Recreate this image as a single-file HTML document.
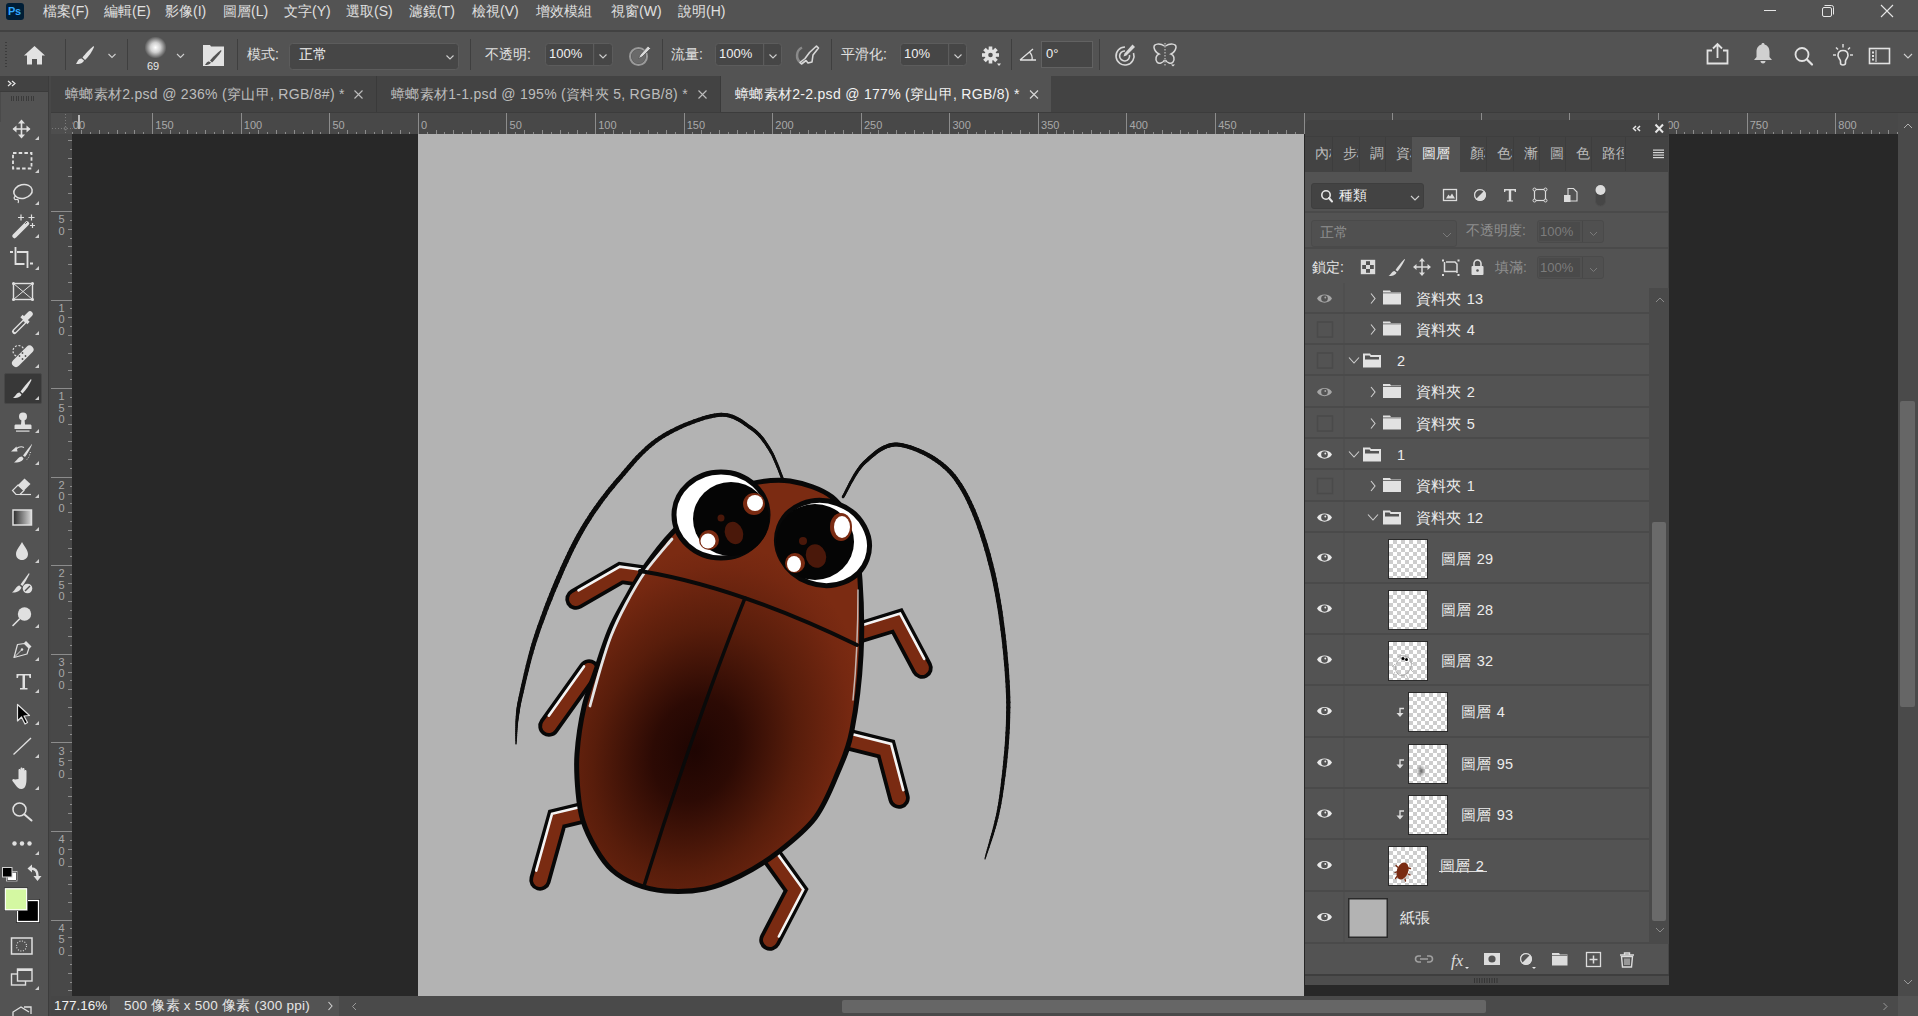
<!DOCTYPE html>
<html><head><meta charset="utf-8">
<style>
*{margin:0;padding:0;box-sizing:border-box}
html,body{width:1918px;height:1016px;overflow:hidden;background:#282828;font-family:"Liberation Sans",sans-serif;color:#dcdcdc;font-size:14px}
.a{position:absolute}
.t{position:absolute;white-space:nowrap;line-height:1}
svg{position:absolute;overflow:visible}
</style></head><body>
<!-- MENU BAR -->
<div class="a" style="left:0;top:0;width:1918px;height:31px;background:#535353"></div>
<div class="a" style="left:0;top:30px;width:1918px;height:2px;background:#424242"></div>
<!-- OPTIONS BAR -->
<div class="a" style="left:0;top:32px;width:1918px;height:44px;background:#535353"></div>
<!-- TAB ROW -->
<div class="a" style="left:0;top:76px;width:1918px;height:37px;background:#3b3b3b"></div>
<div class="a" style="left:51px;top:76px;width:1867px;height:36px;background:#434343"></div>
<!-- LEFT TOOLBAR -->
<div class="a" style="left:0;top:76px;width:48px;height:15px;background:#424242"></div>
<div class="a" style="left:0;top:91px;width:48px;height:1px;background:#3b3b3b"></div>
<div class="a" style="left:0;top:92px;width:48px;height:924px;background:#535353"></div>
<div class="a" style="left:0;top:92px;width:1px;height:30px;background:#4a4a4a"></div>
<div class="a" style="left:48px;top:76px;width:1px;height:940px;background:#3c3c3c"></div>
<div class="a" style="left:49px;top:76px;width:2px;height:940px;background:#474747"></div>
<!-- PASTEBOARD -->
<div class="a" style="left:72px;top:134px;width:1826px;height:862px;background:#282828"></div>

<div class="a" style="left:6px;top:3px;width:18px;height:17px;background:#001e36;border-radius:3px"></div>
<div class="t" style="left:8px;top:6px;font-size:11px;font-weight:bold;color:#31a8ff;letter-spacing:-0.3px">Ps</div>
<div class="t" style="left:43px;top:4px;color:#e0e0e0">檔案(F)</div>
<div class="t" style="left:104px;top:4px;color:#e0e0e0">編輯(E)</div>
<div class="t" style="left:165px;top:4px;color:#e0e0e0">影像(I)</div>
<div class="t" style="left:223px;top:4px;color:#e0e0e0">圖層(L)</div>
<div class="t" style="left:284px;top:4px;color:#e0e0e0">文字(Y)</div>
<div class="t" style="left:346px;top:4px;color:#e0e0e0">選取(S)</div>
<div class="t" style="left:409px;top:4px;color:#e0e0e0">濾鏡(T)</div>
<div class="t" style="left:472px;top:4px;color:#e0e0e0">檢視(V)</div>
<div class="t" style="left:536px;top:4px;color:#e0e0e0">增效模組</div>
<div class="t" style="left:611px;top:4px;color:#e0e0e0">視窗(W)</div>
<div class="t" style="left:678px;top:4px;color:#e0e0e0">說明(H)</div>
<svg style="left:0;top:0" width="1918" height="31">
<line x1="1764" y1="10.5" x2="1776" y2="10.5" stroke="#e6e6e6" stroke-width="1"/>
<rect x="1822.5" y="7.5" width="9" height="9" rx="1.5" fill="none" stroke="#e6e6e6" stroke-width="1"/>
<path d="M1824.5,5.5 h7 a2,2 0 0 1 2,2 v7" fill="none" stroke="#e6e6e6" stroke-width="1"/>
<path d="M1881,5 L1893,17 M1893,5 L1881,17" stroke="#e6e6e6" stroke-width="1.1"/>
</svg>

<svg style="left:0;top:32px" width="1918" height="44" viewBox="0 32 1918 44">
<!-- grip -->
<g fill="#3c3c3c"><rect x="5" y="42" width="2" height="1"/><rect x="5" y="45" width="2" height="1"/><rect x="5" y="48" width="2" height="1"/><rect x="5" y="51" width="2" height="1"/><rect x="5" y="54" width="2" height="1"/><rect x="5" y="57" width="2" height="1"/><rect x="5" y="60" width="2" height="1"/><rect x="5" y="63" width="2" height="1"/><rect x="5" y="66" width="2" height="1"/></g>
<!-- home -->
<path d="M34.5,46 L24,55.5 L27,55.5 L27,64.5 L32,64.5 L32,59 L37,59 L37,64.5 L42,64.5 L42,55.5 L45,55.5 Z" fill="#e2e2e2"/>
<!-- separators -->
<g fill="#3f3f3f"><rect x="65" y="39" width="1" height="31"/><rect x="127" y="39" width="1" height="31"/><rect x="237" y="39" width="1" height="31"/><rect x="470" y="39" width="1" height="31"/><rect x="662" y="39" width="1" height="31"/><rect x="831" y="39" width="1" height="31"/><rect x="1011" y="39" width="1" height="31"/><rect x="1099" y="39" width="1" height="31"/></g>
<!-- brush tool icon -->
<path d="M93.5,46 C90,49 85,54 82.5,57.5 L85,60 C88.5,57 92.5,51 94,47 Z" fill="#e2e2e2"/>
<path d="M81.5,58.5 C78,58.5 77.5,62 76,64 C79,64 83,63.5 84,60.5 Z" fill="#e2e2e2"/>
<!-- chevrons -->
<g fill="none" stroke="#cfcfcf" stroke-width="1.1"><path d="M108.5,54 L112,57.5 L115.5,54"/><path d="M177,54 L180.5,57.5 L184,54"/></g>
<!-- brush preset circle -->
<defs><radialGradient id="bp" cx="0.5" cy="0.5" r="0.5"><stop offset="0" stop-color="#ffffff"/><stop offset="0.45" stop-color="#d0d0d0"/><stop offset="1" stop-color="#535353"/></radialGradient></defs>
<circle cx="155.5" cy="47.5" r="11" fill="url(#bp)"/>
<!-- brush settings icon -->
<path d="M203,45 L210,45 L211,46.5 L224,46.5 L224,66 L203,66 Z" fill="#e2e2e2"/>
<path d="M221,50 C217,53 212,58 210,60.5 L212,62.5 C214.5,60 219,55 221.5,51 Z" fill="#535353"/>
<path d="M209,61.5 C206.5,61.5 206,64 205,65 C207.5,65 210,64.5 211,62.5 Z" fill="#535353"/>
<!-- dropdown mode -->
<rect x="289.5" y="43.5" width="169" height="26" rx="3" fill="#464646" stroke="#5c5c5c"/>
<path d="M446.5,55.5 L450,59 L453.5,55.5" fill="none" stroke="#cfcfcf" stroke-width="1.1"/>
<!-- opacity input -->
<rect x="545.5" y="43.5" width="67" height="22" rx="3" fill="#464646" stroke="#5c5c5c"/>
<rect x="593" y="44" width="1.2" height="21.5" fill="#5c5c5c"/>
<path d="M599.5,54.5 L603,58 L606.5,54.5" fill="none" stroke="#cfcfcf" stroke-width="1.1"/>
<!-- pressure opacity icon -->
<circle cx="638.5" cy="56.5" r="8.5" fill="none" stroke="#9a9a9a" stroke-width="2"/>
<circle cx="638.5" cy="56.5" r="7" fill="#6a6a6a"/>
<path d="M648,46 L650.5,48.5 L642,57 L638.5,58.5 L640,55 Z" fill="#d8d8d8" stroke="#535353" stroke-width="0.8"/>
<!-- flow input -->
<rect x="715.5" y="43.5" width="66" height="22" rx="3" fill="#464646" stroke="#5c5c5c"/>
<rect x="763" y="44" width="1.2" height="21.5" fill="#5c5c5c"/>
<path d="M769.5,54.5 L773,58 L776.5,54.5" fill="none" stroke="#cfcfcf" stroke-width="1.1"/>
<!-- airbrush icon -->
<path d="M802,47.5 A9,9 0 0 0 801,63" fill="none" stroke="#8a8a8a" stroke-width="2.5"/>
<path d="M816.5,46 L818.5,48 L813,55 L812,62 L808,63 L806,60.5 L801.5,64 L800,62.5 L805,58.5 L809.5,52.5 Z" fill="none" stroke="#d8d8d8" stroke-width="1.6" stroke-linejoin="round"/>
<!-- smoothing input -->
<rect x="900.5" y="43.5" width="66" height="22" rx="3" fill="#464646" stroke="#5c5c5c"/>
<rect x="948" y="44" width="1.2" height="21.5" fill="#5c5c5c"/>
<path d="M954.5,54.5 L958,58 L961.5,54.5" fill="none" stroke="#cfcfcf" stroke-width="1.1"/>
<!-- gear -->
<g transform="translate(990.5,55)">
<circle r="5.8" fill="#e2e2e2"/>
<g fill="#e2e2e2"><rect x="-1.8" y="-8.5" width="3.6" height="17"/><rect x="-1.8" y="-8.5" width="3.6" height="17" transform="rotate(45)"/><rect x="-1.8" y="-8.5" width="3.6" height="17" transform="rotate(90)"/><rect x="-1.8" y="-8.5" width="3.6" height="17" transform="rotate(135)"/></g>
<circle r="2.3" fill="#535353"/>
</g>
<path d="M997,63.5 L1001,63.5 L999,66 Z" fill="#e2e2e2"/>
<!-- angle icon -->
<path d="M1020,60 L1036,60 M1020,60 L1033,49 M1029.5,52 A9,9 0 0 1 1032,60" fill="none" stroke="#e2e2e2" stroke-width="1.3"/>
<rect x="1041.5" y="41.5" width="51" height="26" fill="#464646" stroke="#626262"/>
<!-- pressure size icon -->
<path d="M1125,47 A9,9 0 1 0 1133.5,53" fill="none" stroke="#d8d8d8" stroke-width="1.6"/>
<path d="M1125,51 A5,5 0 1 0 1129.5,55" fill="none" stroke="#d8d8d8" stroke-width="1.6"/>
<path d="M1132.5,44.5 L1135,47 L1126.5,55.5 L1123.5,56.5 L1124.5,53.5 Z" fill="#d8d8d8"/>
<!-- butterfly -->
<path d="M1164.5,46 C1160,43 1153.5,43.5 1154,47.5 C1154.5,50 1157,53 1159,54 C1156,55 1155,59 1157,62 C1159,64.5 1163,63 1164.5,60 M1165.5,46 C1170,43 1176.5,43.5 1176,47.5 C1175.5,50 1173,53 1171,54 C1174,55 1175,59 1173,62 C1171,64.5 1167,63 1165.5,60" fill="none" stroke="#d8d8d8" stroke-width="1.5"/>
<line x1="1165" y1="43" x2="1165" y2="67" stroke="#d8d8d8" stroke-width="1" stroke-dasharray="1.5,1.5"/>
<path d="M1171,64.5 L1175,64.5 L1173,66.5 Z" fill="#e2e2e2"/>
<!-- right icons: share -->
<path d="M1712,50.5 L1707.5,50.5 L1707.5,63.5 L1727.5,63.5 L1727.5,50.5 L1723,50.5" fill="none" stroke="#e2e2e2" stroke-width="1.8"/>
<path d="M1717.5,58 L1717.5,45 M1713,48.5 L1717.5,44 L1722,48.5" fill="none" stroke="#e2e2e2" stroke-width="1.8"/>
<!-- bell -->
<path d="M1763,43 C1764,43 1764.5,43.5 1764.5,44.5 C1768,45.5 1769.5,48.5 1769.5,52 L1769.5,57 L1772,60 L1754,60 L1756.5,57 L1756.5,52 C1756.5,48.5 1758,45.5 1761.5,44.5 C1761.5,43.5 1762,43 1763,43 Z" fill="#d0d0d0"/>
<path d="M1760.5,61 L1765.5,61 C1765.5,62.5 1764.5,63.5 1763,63.5 C1761.5,63.5 1760.5,62.5 1760.5,61 Z" fill="#d0d0d0"/>
<!-- search -->
<circle cx="1802" cy="54.5" r="6.5" fill="none" stroke="#e2e2e2" stroke-width="1.8"/>
<line x1="1807" y1="59.5" x2="1812" y2="64.5" stroke="#e2e2e2" stroke-width="2.2" stroke-linecap="round"/>
<!-- bulb -->
<path d="M1843,50.5 C1839.5,50.5 1838,53 1838,55.5 C1838,58 1840.5,59.5 1840.5,61 L1840.5,63 C1840.5,64.5 1841.5,65 1843,65 C1844.5,65 1845.5,64.5 1845.5,63 L1845.5,61 C1845.5,59.5 1848,58 1848,55.5 C1848,53 1846.5,50.5 1843,50.5 Z" fill="none" stroke="#e2e2e2" stroke-width="1.6"/>
<g stroke="#e2e2e2" stroke-width="1.4"><line x1="1843" y1="44" x2="1843" y2="47.5"/><line x1="1833" y1="55" x2="1836" y2="55"/><line x1="1850" y1="55" x2="1853" y2="55"/><line x1="1836" y1="47.5" x2="1838" y2="49.5"/><line x1="1850" y1="47.5" x2="1848" y2="49.5"/></g>
<!-- workspace -->
<rect x="1869.5" y="48.5" width="20" height="15" fill="none" stroke="#e2e2e2" stroke-width="1.6"/>
<g fill="#e2e2e2"><rect x="1872" y="51.5" width="2" height="2"/><rect x="1872" y="55" width="2" height="2"/><rect x="1872" y="58.5" width="2" height="2"/><rect x="1875.5" y="50" width="1" height="12"/></g>
<path d="M1904,54 L1908,58 L1912,54" fill="none" stroke="#cfcfcf" stroke-width="1.1"/>
</svg>
<div class="t" style="left:147px;top:61px;font-size:11px;color:#e8e8e8">69</div>
<div class="t" style="left:247px;top:47px;color:#e0e0e0">模式:</div>
<div class="t" style="left:299px;top:47px;color:#f0f0f0">正常</div>
<div class="t" style="left:485px;top:47px;color:#e0e0e0">不透明:</div>
<div class="t" style="left:549px;top:47px;font-size:13px;color:#f0f0f0">100%</div>
<div class="t" style="left:671px;top:47px;color:#e0e0e0">流量:</div>
<div class="t" style="left:719px;top:47px;font-size:13px;color:#f0f0f0">100%</div>
<div class="t" style="left:841px;top:47px;color:#e0e0e0">平滑化:</div>
<div class="t" style="left:904px;top:47px;font-size:13px;color:#f0f0f0">10%</div>
<div class="t" style="left:1046px;top:47px;font-size:13px;color:#f0f0f0">0°</div>

<div class="a" style="left:376px;top:76px;width:1px;height:36px;background:#3a3a3a"></div>
<div class="a" style="left:720px;top:76px;width:1px;height:36px;background:#3a3a3a"></div>
<div class="a" style="left:721px;top:76px;width:330px;height:36px;background:#535353"></div>
<div class="t" style="left:65px;top:87px;letter-spacing:0.3px;color:#bdbdbd">蟑螂素材2.psd @ 236% (穿山甲, RGB/8#) *</div>
<div class="t" style="left:391px;top:87px;letter-spacing:0.3px;color:#bdbdbd">蟑螂素材1-1.psd @ 195% (資料夾 5, RGB/8) *</div>
<div class="t" style="left:735px;top:87px;letter-spacing:0.3px;color:#f2f2f2">蟑螂素材2-2.psd @ 177% (穿山甲, RGB/8) *</div>
<svg style="left:0;top:76px" width="1918" height="36" viewBox="0 76 1918 36">
<path d="M354.5,90.5 L362.5,98.5 M362.5,90.5 L354.5,98.5" stroke="#bdbdbd" stroke-width="1.1"/>
<path d="M698.5,90.5 L706.5,98.5 M706.5,90.5 L698.5,98.5" stroke="#bdbdbd" stroke-width="1.1"/>
<path d="M1030,90.5 L1038,98.5 M1038,90.5 L1030,98.5" stroke="#d8d8d8" stroke-width="1.1"/>
<!-- >> -->
<path d="M8,81 L11,83.5 L8,86 M12,81 L15,83.5 L12,86" fill="none" stroke="#e8e8e8" stroke-width="1.2"/>
<g fill="#3a3a3a"><rect x="11" y="96" width="1" height="5"/><rect x="13" y="96" width="1" height="5"/><rect x="16" y="96" width="1" height="5"/><rect x="18" y="96" width="1" height="5"/><rect x="21" y="96" width="1" height="5"/><rect x="23" y="96" width="1" height="5"/><rect x="26" y="96" width="1" height="5"/><rect x="28" y="96" width="1" height="5"/><rect x="31" y="96" width="1" height="5"/><rect x="33" y="96" width="1" height="5"/></g>
</svg>

<div class="a" style="left:51px;top:112px;width:1867px;height:1px;background:#3c3c3c"></div>
<div class="a" style="left:51px;top:113px;width:1847px;height:21px;background:#484848"></div>
<div class="a" style="left:51px;top:134px;width:21px;height:862px;background:#484848"></div>
<svg style="left:0;top:0" width="1918" height="1016" viewBox="0 0 1918 1016"><g fill="#8c8c8c">
<rect x="72" y="132" width="1" height="2"/>
<rect x="81" y="130" width="1" height="4"/>
<rect x="90" y="132" width="1" height="2"/>
<rect x="99" y="130" width="1" height="4"/>
<rect x="108" y="132" width="1" height="2"/>
<rect x="117" y="130" width="1" height="4"/>
<rect x="125" y="132" width="1" height="2"/>
<rect x="134" y="130" width="1" height="4"/>
<rect x="143" y="132" width="1" height="2"/>
<rect x="152" y="113" width="1" height="21"/>
<rect x="161" y="132" width="1" height="2"/>
<rect x="170" y="130" width="1" height="4"/>
<rect x="179" y="132" width="1" height="2"/>
<rect x="187" y="130" width="1" height="4"/>
<rect x="196" y="132" width="1" height="2"/>
<rect x="205" y="130" width="1" height="4"/>
<rect x="214" y="132" width="1" height="2"/>
<rect x="223" y="130" width="1" height="4"/>
<rect x="232" y="132" width="1" height="2"/>
<rect x="241" y="113" width="1" height="21"/>
<rect x="249" y="132" width="1" height="2"/>
<rect x="258" y="130" width="1" height="4"/>
<rect x="267" y="132" width="1" height="2"/>
<rect x="276" y="130" width="1" height="4"/>
<rect x="285" y="132" width="1" height="2"/>
<rect x="294" y="130" width="1" height="4"/>
<rect x="303" y="132" width="1" height="2"/>
<rect x="312" y="130" width="1" height="4"/>
<rect x="320" y="132" width="1" height="2"/>
<rect x="329" y="113" width="1" height="21"/>
<rect x="338" y="132" width="1" height="2"/>
<rect x="347" y="130" width="1" height="4"/>
<rect x="356" y="132" width="1" height="2"/>
<rect x="365" y="130" width="1" height="4"/>
<rect x="374" y="132" width="1" height="2"/>
<rect x="382" y="130" width="1" height="4"/>
<rect x="391" y="132" width="1" height="2"/>
<rect x="400" y="130" width="1" height="4"/>
<rect x="409" y="132" width="1" height="2"/>
<rect x="418" y="113" width="1" height="21"/>
<rect x="427" y="132" width="1" height="2"/>
<rect x="436" y="130" width="1" height="4"/>
<rect x="444" y="132" width="1" height="2"/>
<rect x="453" y="130" width="1" height="4"/>
<rect x="462" y="132" width="1" height="2"/>
<rect x="471" y="130" width="1" height="4"/>
<rect x="480" y="132" width="1" height="2"/>
<rect x="489" y="130" width="1" height="4"/>
<rect x="498" y="132" width="1" height="2"/>
<rect x="506" y="113" width="1" height="21"/>
<rect x="515" y="132" width="1" height="2"/>
<rect x="524" y="130" width="1" height="4"/>
<rect x="533" y="132" width="1" height="2"/>
<rect x="542" y="130" width="1" height="4"/>
<rect x="551" y="132" width="1" height="2"/>
<rect x="560" y="130" width="1" height="4"/>
<rect x="568" y="132" width="1" height="2"/>
<rect x="577" y="130" width="1" height="4"/>
<rect x="586" y="132" width="1" height="2"/>
<rect x="595" y="113" width="1" height="21"/>
<rect x="604" y="132" width="1" height="2"/>
<rect x="613" y="130" width="1" height="4"/>
<rect x="622" y="132" width="1" height="2"/>
<rect x="630" y="130" width="1" height="4"/>
<rect x="639" y="132" width="1" height="2"/>
<rect x="648" y="130" width="1" height="4"/>
<rect x="657" y="132" width="1" height="2"/>
<rect x="666" y="130" width="1" height="4"/>
<rect x="675" y="132" width="1" height="2"/>
<rect x="684" y="113" width="1" height="21"/>
<rect x="692" y="132" width="1" height="2"/>
<rect x="701" y="130" width="1" height="4"/>
<rect x="710" y="132" width="1" height="2"/>
<rect x="719" y="130" width="1" height="4"/>
<rect x="728" y="132" width="1" height="2"/>
<rect x="737" y="130" width="1" height="4"/>
<rect x="746" y="132" width="1" height="2"/>
<rect x="754" y="130" width="1" height="4"/>
<rect x="763" y="132" width="1" height="2"/>
<rect x="772" y="113" width="1" height="21"/>
<rect x="781" y="132" width="1" height="2"/>
<rect x="790" y="130" width="1" height="4"/>
<rect x="799" y="132" width="1" height="2"/>
<rect x="808" y="130" width="1" height="4"/>
<rect x="816" y="132" width="1" height="2"/>
<rect x="825" y="130" width="1" height="4"/>
<rect x="834" y="132" width="1" height="2"/>
<rect x="843" y="130" width="1" height="4"/>
<rect x="852" y="132" width="1" height="2"/>
<rect x="861" y="113" width="1" height="21"/>
<rect x="870" y="132" width="1" height="2"/>
<rect x="878" y="130" width="1" height="4"/>
<rect x="887" y="132" width="1" height="2"/>
<rect x="896" y="130" width="1" height="4"/>
<rect x="905" y="132" width="1" height="2"/>
<rect x="914" y="130" width="1" height="4"/>
<rect x="923" y="132" width="1" height="2"/>
<rect x="932" y="130" width="1" height="4"/>
<rect x="940" y="132" width="1" height="2"/>
<rect x="949" y="113" width="1" height="21"/>
<rect x="958" y="132" width="1" height="2"/>
<rect x="967" y="130" width="1" height="4"/>
<rect x="976" y="132" width="1" height="2"/>
<rect x="985" y="130" width="1" height="4"/>
<rect x="994" y="132" width="1" height="2"/>
<rect x="1002" y="130" width="1" height="4"/>
<rect x="1011" y="132" width="1" height="2"/>
<rect x="1020" y="130" width="1" height="4"/>
<rect x="1029" y="132" width="1" height="2"/>
<rect x="1038" y="113" width="1" height="21"/>
<rect x="1047" y="132" width="1" height="2"/>
<rect x="1056" y="130" width="1" height="4"/>
<rect x="1064" y="132" width="1" height="2"/>
<rect x="1073" y="130" width="1" height="4"/>
<rect x="1082" y="132" width="1" height="2"/>
<rect x="1091" y="130" width="1" height="4"/>
<rect x="1100" y="132" width="1" height="2"/>
<rect x="1109" y="130" width="1" height="4"/>
<rect x="1118" y="132" width="1" height="2"/>
<rect x="1126" y="113" width="1" height="21"/>
<rect x="1135" y="132" width="1" height="2"/>
<rect x="1144" y="130" width="1" height="4"/>
<rect x="1153" y="132" width="1" height="2"/>
<rect x="1162" y="130" width="1" height="4"/>
<rect x="1171" y="132" width="1" height="2"/>
<rect x="1180" y="130" width="1" height="4"/>
<rect x="1188" y="132" width="1" height="2"/>
<rect x="1197" y="130" width="1" height="4"/>
<rect x="1206" y="132" width="1" height="2"/>
<rect x="1215" y="113" width="1" height="21"/>
<rect x="1224" y="132" width="1" height="2"/>
<rect x="1233" y="130" width="1" height="4"/>
<rect x="1242" y="132" width="1" height="2"/>
<rect x="1250" y="130" width="1" height="4"/>
<rect x="1259" y="132" width="1" height="2"/>
<rect x="1268" y="130" width="1" height="4"/>
<rect x="1277" y="132" width="1" height="2"/>
<rect x="1286" y="130" width="1" height="4"/>
<rect x="1295" y="132" width="1" height="2"/>
<rect x="1304" y="113" width="1" height="21"/>
<rect x="1312" y="132" width="1" height="2"/>
<rect x="1321" y="130" width="1" height="4"/>
<rect x="1330" y="132" width="1" height="2"/>
<rect x="1339" y="130" width="1" height="4"/>
<rect x="1348" y="132" width="1" height="2"/>
<rect x="1357" y="130" width="1" height="4"/>
<rect x="1366" y="132" width="1" height="2"/>
<rect x="1374" y="130" width="1" height="4"/>
<rect x="1383" y="132" width="1" height="2"/>
<rect x="1392" y="113" width="1" height="21"/>
<rect x="1401" y="132" width="1" height="2"/>
<rect x="1410" y="130" width="1" height="4"/>
<rect x="1419" y="132" width="1" height="2"/>
<rect x="1428" y="130" width="1" height="4"/>
<rect x="1436" y="132" width="1" height="2"/>
<rect x="1445" y="130" width="1" height="4"/>
<rect x="1454" y="132" width="1" height="2"/>
<rect x="1463" y="130" width="1" height="4"/>
<rect x="1472" y="132" width="1" height="2"/>
<rect x="1481" y="113" width="1" height="21"/>
<rect x="1490" y="132" width="1" height="2"/>
<rect x="1498" y="130" width="1" height="4"/>
<rect x="1507" y="132" width="1" height="2"/>
<rect x="1516" y="130" width="1" height="4"/>
<rect x="1525" y="132" width="1" height="2"/>
<rect x="1534" y="130" width="1" height="4"/>
<rect x="1543" y="132" width="1" height="2"/>
<rect x="1552" y="130" width="1" height="4"/>
<rect x="1560" y="132" width="1" height="2"/>
<rect x="1569" y="113" width="1" height="21"/>
<rect x="1578" y="132" width="1" height="2"/>
<rect x="1587" y="130" width="1" height="4"/>
<rect x="1596" y="132" width="1" height="2"/>
<rect x="1605" y="130" width="1" height="4"/>
<rect x="1614" y="132" width="1" height="2"/>
<rect x="1622" y="130" width="1" height="4"/>
<rect x="1631" y="132" width="1" height="2"/>
<rect x="1640" y="130" width="1" height="4"/>
<rect x="1649" y="132" width="1" height="2"/>
<rect x="1658" y="113" width="1" height="21"/>
<rect x="1667" y="132" width="1" height="2"/>
<rect x="1676" y="130" width="1" height="4"/>
<rect x="1684" y="132" width="1" height="2"/>
<rect x="1693" y="130" width="1" height="4"/>
<rect x="1702" y="132" width="1" height="2"/>
<rect x="1711" y="130" width="1" height="4"/>
<rect x="1720" y="132" width="1" height="2"/>
<rect x="1729" y="130" width="1" height="4"/>
<rect x="1738" y="132" width="1" height="2"/>
<rect x="1747" y="113" width="1" height="21"/>
<rect x="1755" y="132" width="1" height="2"/>
<rect x="1764" y="130" width="1" height="4"/>
<rect x="1773" y="132" width="1" height="2"/>
<rect x="1782" y="130" width="1" height="4"/>
<rect x="1791" y="132" width="1" height="2"/>
<rect x="1800" y="130" width="1" height="4"/>
<rect x="1809" y="132" width="1" height="2"/>
<rect x="1817" y="130" width="1" height="4"/>
<rect x="1826" y="132" width="1" height="2"/>
<rect x="1835" y="113" width="1" height="21"/>
<rect x="1844" y="132" width="1" height="2"/>
<rect x="1853" y="130" width="1" height="4"/>
<rect x="1862" y="132" width="1" height="2"/>
<rect x="1871" y="130" width="1" height="4"/>
<rect x="1879" y="132" width="1" height="2"/>
<rect x="1888" y="130" width="1" height="4"/>
<rect x="1897" y="132" width="1" height="2"/>
</g><g fill="#8c8c8c">
<rect x="68" y="140" width="4" height="1"/>
<rect x="70" y="149" width="2" height="1"/>
<rect x="68" y="158" width="4" height="1"/>
<rect x="70" y="167" width="2" height="1"/>
<rect x="68" y="176" width="4" height="1"/>
<rect x="70" y="184" width="2" height="1"/>
<rect x="68" y="193" width="4" height="1"/>
<rect x="70" y="202" width="2" height="1"/>
<rect x="51" y="211" width="21" height="1"/>
<rect x="70" y="220" width="2" height="1"/>
<rect x="68" y="229" width="4" height="1"/>
<rect x="70" y="238" width="2" height="1"/>
<rect x="68" y="246" width="4" height="1"/>
<rect x="70" y="255" width="2" height="1"/>
<rect x="68" y="264" width="4" height="1"/>
<rect x="70" y="273" width="2" height="1"/>
<rect x="68" y="282" width="4" height="1"/>
<rect x="70" y="291" width="2" height="1"/>
<rect x="51" y="300" width="21" height="1"/>
<rect x="70" y="308" width="2" height="1"/>
<rect x="68" y="317" width="4" height="1"/>
<rect x="70" y="326" width="2" height="1"/>
<rect x="68" y="335" width="4" height="1"/>
<rect x="70" y="344" width="2" height="1"/>
<rect x="68" y="353" width="4" height="1"/>
<rect x="70" y="362" width="2" height="1"/>
<rect x="68" y="370" width="4" height="1"/>
<rect x="70" y="379" width="2" height="1"/>
<rect x="51" y="388" width="21" height="1"/>
<rect x="70" y="397" width="2" height="1"/>
<rect x="68" y="406" width="4" height="1"/>
<rect x="70" y="415" width="2" height="1"/>
<rect x="68" y="424" width="4" height="1"/>
<rect x="70" y="432" width="2" height="1"/>
<rect x="68" y="441" width="4" height="1"/>
<rect x="70" y="450" width="2" height="1"/>
<rect x="68" y="459" width="4" height="1"/>
<rect x="70" y="468" width="2" height="1"/>
<rect x="51" y="477" width="21" height="1"/>
<rect x="70" y="486" width="2" height="1"/>
<rect x="68" y="494" width="4" height="1"/>
<rect x="70" y="503" width="2" height="1"/>
<rect x="68" y="512" width="4" height="1"/>
<rect x="70" y="521" width="2" height="1"/>
<rect x="68" y="530" width="4" height="1"/>
<rect x="70" y="539" width="2" height="1"/>
<rect x="68" y="548" width="4" height="1"/>
<rect x="70" y="556" width="2" height="1"/>
<rect x="51" y="565" width="21" height="1"/>
<rect x="70" y="574" width="2" height="1"/>
<rect x="68" y="583" width="4" height="1"/>
<rect x="70" y="592" width="2" height="1"/>
<rect x="68" y="601" width="4" height="1"/>
<rect x="70" y="610" width="2" height="1"/>
<rect x="68" y="618" width="4" height="1"/>
<rect x="70" y="627" width="2" height="1"/>
<rect x="68" y="636" width="4" height="1"/>
<rect x="70" y="645" width="2" height="1"/>
<rect x="51" y="654" width="21" height="1"/>
<rect x="70" y="663" width="2" height="1"/>
<rect x="68" y="672" width="4" height="1"/>
<rect x="70" y="680" width="2" height="1"/>
<rect x="68" y="689" width="4" height="1"/>
<rect x="70" y="698" width="2" height="1"/>
<rect x="68" y="707" width="4" height="1"/>
<rect x="70" y="716" width="2" height="1"/>
<rect x="68" y="725" width="4" height="1"/>
<rect x="70" y="734" width="2" height="1"/>
<rect x="51" y="742" width="21" height="1"/>
<rect x="70" y="751" width="2" height="1"/>
<rect x="68" y="760" width="4" height="1"/>
<rect x="70" y="769" width="2" height="1"/>
<rect x="68" y="778" width="4" height="1"/>
<rect x="70" y="787" width="2" height="1"/>
<rect x="68" y="796" width="4" height="1"/>
<rect x="70" y="804" width="2" height="1"/>
<rect x="68" y="813" width="4" height="1"/>
<rect x="70" y="822" width="2" height="1"/>
<rect x="51" y="831" width="21" height="1"/>
<rect x="70" y="840" width="2" height="1"/>
<rect x="68" y="849" width="4" height="1"/>
<rect x="70" y="858" width="2" height="1"/>
<rect x="68" y="866" width="4" height="1"/>
<rect x="70" y="875" width="2" height="1"/>
<rect x="68" y="884" width="4" height="1"/>
<rect x="70" y="893" width="2" height="1"/>
<rect x="68" y="902" width="4" height="1"/>
<rect x="70" y="911" width="2" height="1"/>
<rect x="51" y="920" width="21" height="1"/>
<rect x="70" y="928" width="2" height="1"/>
<rect x="68" y="937" width="4" height="1"/>
<rect x="70" y="946" width="2" height="1"/>
<rect x="68" y="955" width="4" height="1"/>
<rect x="70" y="964" width="2" height="1"/>
<rect x="68" y="973" width="4" height="1"/>
<rect x="70" y="982" width="2" height="1"/>
<rect x="68" y="990" width="4" height="1"/>
</g></svg>
<div class="t" style="left:-21.9px;top:120px;font-size:11px;color:#a8a8a8">250</div>
<div class="t" style="left:66.7px;top:120px;font-size:11px;color:#a8a8a8">200</div>
<div class="t" style="left:155.3px;top:120px;font-size:11px;color:#a8a8a8">150</div>
<div class="t" style="left:243.8px;top:120px;font-size:11px;color:#a8a8a8">100</div>
<div class="t" style="left:332.4px;top:120px;font-size:11px;color:#a8a8a8">50</div>
<div class="t" style="left:421.0px;top:120px;font-size:11px;color:#a8a8a8">0</div>
<div class="t" style="left:509.6px;top:120px;font-size:11px;color:#a8a8a8">50</div>
<div class="t" style="left:598.2px;top:120px;font-size:11px;color:#a8a8a8">100</div>
<div class="t" style="left:686.7px;top:120px;font-size:11px;color:#a8a8a8">150</div>
<div class="t" style="left:775.3px;top:120px;font-size:11px;color:#a8a8a8">200</div>
<div class="t" style="left:863.9px;top:120px;font-size:11px;color:#a8a8a8">250</div>
<div class="t" style="left:952.5px;top:120px;font-size:11px;color:#a8a8a8">300</div>
<div class="t" style="left:1041.1px;top:120px;font-size:11px;color:#a8a8a8">350</div>
<div class="t" style="left:1129.6px;top:120px;font-size:11px;color:#a8a8a8">400</div>
<div class="t" style="left:1218.2px;top:120px;font-size:11px;color:#a8a8a8">450</div>
<div class="t" style="left:1306.8px;top:120px;font-size:11px;color:#a8a8a8">500</div>
<div class="t" style="left:1395.4px;top:120px;font-size:11px;color:#a8a8a8">550</div>
<div class="t" style="left:1484.0px;top:120px;font-size:11px;color:#a8a8a8">600</div>
<div class="t" style="left:1572.5px;top:120px;font-size:11px;color:#a8a8a8">650</div>
<div class="t" style="left:1661.1px;top:120px;font-size:11px;color:#a8a8a8">700</div>
<div class="t" style="left:1749.7px;top:120px;font-size:11px;color:#a8a8a8">750</div>
<div class="t" style="left:1838.3px;top:120px;font-size:11px;color:#a8a8a8">800</div>
<div class="t" style="left:58.5px;top:214.0px;font-size:11px;color:#a8a8a8">5</div>
<div class="t" style="left:58.5px;top:225.5px;font-size:11px;color:#a8a8a8">0</div>
<div class="t" style="left:58.5px;top:302.6px;font-size:11px;color:#a8a8a8">1</div>
<div class="t" style="left:58.5px;top:314.1px;font-size:11px;color:#a8a8a8">0</div>
<div class="t" style="left:58.5px;top:325.6px;font-size:11px;color:#a8a8a8">0</div>
<div class="t" style="left:58.5px;top:391.1px;font-size:11px;color:#a8a8a8">1</div>
<div class="t" style="left:58.5px;top:402.6px;font-size:11px;color:#a8a8a8">5</div>
<div class="t" style="left:58.5px;top:414.1px;font-size:11px;color:#a8a8a8">0</div>
<div class="t" style="left:58.5px;top:479.7px;font-size:11px;color:#a8a8a8">2</div>
<div class="t" style="left:58.5px;top:491.2px;font-size:11px;color:#a8a8a8">0</div>
<div class="t" style="left:58.5px;top:502.7px;font-size:11px;color:#a8a8a8">0</div>
<div class="t" style="left:58.5px;top:568.3px;font-size:11px;color:#a8a8a8">2</div>
<div class="t" style="left:58.5px;top:579.8px;font-size:11px;color:#a8a8a8">5</div>
<div class="t" style="left:58.5px;top:591.3px;font-size:11px;color:#a8a8a8">0</div>
<div class="t" style="left:58.5px;top:656.9px;font-size:11px;color:#a8a8a8">3</div>
<div class="t" style="left:58.5px;top:668.4px;font-size:11px;color:#a8a8a8">0</div>
<div class="t" style="left:58.5px;top:679.9px;font-size:11px;color:#a8a8a8">0</div>
<div class="t" style="left:58.5px;top:745.5px;font-size:11px;color:#a8a8a8">3</div>
<div class="t" style="left:58.5px;top:757.0px;font-size:11px;color:#a8a8a8">5</div>
<div class="t" style="left:58.5px;top:768.5px;font-size:11px;color:#a8a8a8">0</div>
<div class="t" style="left:58.5px;top:834.0px;font-size:11px;color:#a8a8a8">4</div>
<div class="t" style="left:58.5px;top:845.5px;font-size:11px;color:#a8a8a8">0</div>
<div class="t" style="left:58.5px;top:857.0px;font-size:11px;color:#a8a8a8">0</div>
<div class="t" style="left:58.5px;top:922.6px;font-size:11px;color:#a8a8a8">4</div>
<div class="t" style="left:58.5px;top:934.1px;font-size:11px;color:#a8a8a8">5</div>
<div class="t" style="left:58.5px;top:945.6px;font-size:11px;color:#a8a8a8">0</div>
<div class="a" style="left:51px;top:113px;width:21px;height:21px;background:#4e4e4e"></div>
<svg style="left:51px;top:113px" width="21" height="21" viewBox="51 113 21 21"><line x1="65.5" y1="114" x2="65.5" y2="133" stroke="#7a7a7a" stroke-width="1" stroke-dasharray="1,2"/><line x1="52" y1="128.5" x2="71" y2="128.5" stroke="#7a7a7a" stroke-width="1" stroke-dasharray="1,2"/><circle cx="65.5" cy="128.5" r="1.5" fill="none" stroke="#7a7a7a" stroke-width="0.8"/></svg>
<div class="a" style="left:78px;top:115px;width:2px;height:14px;background:#b8b8b8"></div>
<div class="a" style="left:4px;top:373px;width:38px;height:31px;background:#383838;border:1px solid #474747;border-radius:2px"></div>
<svg style="left:0;top:0" width="48" height="1016" viewBox="0 0 48 1016">
<g fill="#cfcfcf">
<path d="M35,140 L39,140 L39,136 Z"/><path d="M35,173 L39,173 L39,169 Z"/><path d="M35,205 L39,205 L39,201 Z"/><path d="M35,238 L39,238 L39,234 Z"/><path d="M35,270 L39,270 L39,266 Z"/><path d="M35,335 L39,335 L39,331 Z"/><path d="M35,368 L39,368 L39,364 Z"/><path d="M35,400 L39,400 L39,396 Z"/><path d="M35,433 L39,433 L39,429 Z"/><path d="M35,465 L39,465 L39,461 Z"/><path d="M35,498 L39,498 L39,494 Z"/><path d="M35,531 L39,531 L39,527 Z"/><path d="M35,563 L39,563 L39,559 Z"/><path d="M35,628 L39,628 L39,624 Z"/><path d="M35,661 L39,661 L39,657 Z"/><path d="M35,693 L39,693 L39,689 Z"/><path d="M35,725 L39,725 L39,721 Z"/><path d="M35,758 L39,758 L39,754 Z"/><path d="M35,790 L39,790 L39,786 Z"/><path d="M35,855 L39,855 L39,851 Z"/><path d="M35,990 L39,990 L39,986 Z"/>
</g>
<g stroke="#e0e0e0" fill="none" stroke-width="1.6">
<!-- move -->
<path d="M21.5,121 V137 M13.5,129 H29.5"/>
</g>
<g fill="#e0e0e0">
<path d="M21.5,119.5 L18,123.5 L25,123.5Z M21.5,138.5 L18,134.5 L25,134.5Z M12.5,129 L16.5,125.5 L16.5,132.5Z M30.5,129 L26.5,125.5 L26.5,132.5Z"/>
</g>
<!-- marquee -->
<rect x="13" y="153" width="18.5" height="15.5" fill="none" stroke="#e0e0e0" stroke-width="1.8" stroke-dasharray="3.5,2.2"/>
<!-- lasso -->
<ellipse cx="23" cy="191.5" rx="9.3" ry="6.8" transform="rotate(-12 23 191.5)" fill="none" stroke="#e0e0e0" stroke-width="1.5"/>
<path d="M16,196 C13,197 14,200 16.5,199.5 C18.5,199 19,201.5 18,203" fill="none" stroke="#e0e0e0" stroke-width="1.2"/>
<!-- wand -->
<path d="M14.5,236 L27,223.5" stroke="#e0e0e0" stroke-width="4.5" stroke-linecap="round"/>
<path d="M25.5,223.5 L27,222" stroke="#535353" stroke-width="1" stroke-linecap="round"/>
<path d="M21,214.5 V220.5 M18,217.5 H24 M31.5,214.5 V220.5 M28.5,217.5 H34.5 M32.5,223 V228 M30,225.5 H35" stroke="#e0e0e0" stroke-width="1.2"/>
<!-- crop -->
<path d="M15.5,247 V264 H24.5 M10,252 H13 M17,252 H27.5 V268 M30,263.5 H33" fill="none" stroke="#e0e0e0" stroke-width="1.8"/>
<!-- frame -->
<rect x="13.5" y="283.5" width="19" height="16" fill="none" stroke="#e0e0e0" stroke-width="1.4"/>
<path d="M13.5,283.5 L32.5,299.5 M32.5,283.5 L13.5,299.5" stroke="#e0e0e0" stroke-width="1"/>
<g fill="#e0e0e0"><circle cx="13.5" cy="283.5" r="1.5"/><circle cx="32.5" cy="283.5" r="1.5"/><circle cx="13.5" cy="299.5" r="1.5"/><circle cx="32.5" cy="299.5" r="1.5"/></g>
<!-- eyedropper -->
<path d="M26.5,317.5 L30,314" stroke="#e0e0e0" stroke-width="5.5" stroke-linecap="round"/>
<path d="M21.5,316 L28.5,323" stroke="#e0e0e0" stroke-width="3.2"/>
<path d="M24,322 L14.5,331.5" stroke="#e0e0e0" stroke-width="5" stroke-linecap="round"/>
<path d="M23.5,322.5 L15,331" stroke="#535353" stroke-width="2.4" stroke-linecap="round"/>
<!-- healing -->
<path d="M16,363 L29.5,349.5" stroke="#e0e0e0" stroke-width="8" stroke-linecap="round"/>
<circle cx="18.5" cy="351" r="5.5" fill="none" stroke="#e0e0e0" stroke-width="1.2" stroke-dasharray="2,1.6"/>
<g fill="#535353"><circle cx="22.5" cy="353" r="0.9"/><circle cx="25.5" cy="356" r="0.9"/><circle cx="19.5" cy="356" r="0.9"/><circle cx="22.5" cy="359" r="0.9"/></g>
<!-- brush -->
<path d="M31,379 C27,383 23,388 20.5,391.5 L22.5,393.5 C26,390 29.5,384.5 31.5,380 Z" fill="#e0e0e0"/>
<path d="M19.5,392.5 C16,393 15.5,396.5 13,398 C16.5,398.5 21,397 21.5,394.5 Z" fill="#e0e0e0"/>
<!-- stamp -->
<circle cx="23" cy="416.5" r="4" fill="#e0e0e0"/>
<path d="M21.5,419 H24.5 L25,424.5 H30 C31,424.5 31.5,425 31.5,426 V429 H14.5 V426 C14.5,425 15,424.5 16,424.5 H21 Z" fill="#e0e0e0"/>
<rect x="16" y="430.5" width="13.5" height="1.2" fill="#e0e0e0"/>
<!-- history brush -->
<path d="M32,444 C29,447.5 25.5,452 23,455.5 L25,457 C27.5,453.5 30.5,448.5 32,444.5 Z" fill="#e0e0e0"/>
<path d="M22,456.5 C18.5,456.5 17.5,460 14,462.5 C18,463 22.5,461.5 23.5,458.5 Z" fill="#e0e0e0"/>
<path d="M11,451.5 L16.5,446.5 L17.5,451.5 Z" fill="#e0e0e0"/>
<path d="M16,449 C19,446.5 22,446.5 24,447.5" fill="none" stroke="#e0e0e0" stroke-width="1.1"/>
<path d="M30.5,452 L29,457 L26.5,460" fill="none" stroke="#e0e0e0" stroke-width="1" stroke-dasharray="1,1.5"/>
<!-- eraser -->
<path d="M24.5,478.5 L30.5,484 L20.5,494 L14.5,488.5 Z" fill="#e0e0e0"/>
<path d="M18,485 L24,490.5 L20,494.5 L16,494.5 L12.5,490.5 Z" fill="#535353" stroke="#e0e0e0" stroke-width="1.2"/>
<path d="M20,494.5 H31" stroke="#e0e0e0" stroke-width="1.2"/>
<!-- gradient -->
<defs><linearGradient id="gr" x1="0" x2="1"><stop offset="0" stop-color="#2a2a2a"/><stop offset="1" stop-color="#d8d8d8"/></linearGradient></defs>
<rect x="13" y="510" width="18.5" height="15" fill="url(#gr)" stroke="#e0e0e0" stroke-width="1.5"/>
<!-- drop -->
<path d="M22,542 C20,546 16,550 16,554 C16,557.5 18.5,560 22,560 C25.5,560 28,557.5 28,554 C28,550 24,546 22,542 Z" fill="#e0e0e0"/>
<!-- smudge -->
<path d="M29,573 C26,577 23,581 20.5,584.5 L22.5,586 C25,582.5 27.5,578 29.5,574 Z" fill="#e0e0e0"/>
<path d="M19.5,585.5 C16,586 15.5,590 12,592.5 C16,593 20.5,591 21.5,587.5 Z" fill="#e0e0e0"/>
<circle cx="27.5" cy="588.5" r="4.8" fill="#e0e0e0"/>
<path d="M25,591 L30,586" stroke="#535353" stroke-width="1.5"/>
<!-- dodge -->
<circle cx="24.5" cy="614" r="6.7" fill="#e0e0e0"/>
<path d="M13,625.5 L19.5,619" stroke="#e0e0e0" stroke-width="1.6" stroke-linecap="round"/>
<!-- pen -->
<path d="M26,641 L31.5,646.5 L29.5,648.5 L24,643 Z" fill="#e0e0e0"/>
<path d="M24.5,643.5 L29,648 L27,654 L14,657.5 L17.5,644.5 Z" fill="none" stroke="#e0e0e0" stroke-width="1.2" stroke-linejoin="round"/>
<path d="M14.5,657 L21.5,650" stroke="#e0e0e0" stroke-width="1"/><circle cx="22" cy="649.5" r="1.2" fill="#e0e0e0"/>
<!-- type -->
<path d="M16.5,674 H31 V678 H29.5 L29,675.5 H25 V688 H27.5 V689.5 H20 V688 H22.5 V675.5 H18.5 L18,678 H16.5 Z" fill="#e0e0e0"/>
<!-- path select -->
<path d="M17.5,704.5 L17.5,721 L21.5,717 L25,724 L27.5,722.5 L24,716 L29.5,715.5 Z" fill="#000" stroke="#e0e0e0" stroke-width="1.2" stroke-linejoin="round"/>
<!-- line -->
<path d="M13.5,754.5 L31,738" stroke="#e0e0e0" stroke-width="1.3"/>
<!-- hand -->
<path d="M18.5,779 V770 C18.5,768.5 20.5,768.5 20.5,770 V777 V768.5 C20.5,767 22.5,767 22.5,768.5 V777 V769 C22.5,767.5 24.5,767.5 24.5,769 V777 V771 C24.5,769.5 26.5,769.5 26.5,771 V779 C26.5,785 25,789 21.5,789 C18.5,789 17,787 15.5,785 L12.5,781 C11.5,779.5 13.5,778 15,779.5 Z" fill="#e0e0e0"/>
<!-- zoom -->
<circle cx="19.5" cy="809.5" r="6.5" fill="none" stroke="#e0e0e0" stroke-width="1.5"/>
<path d="M24.5,814.5 L31.5,820.5" stroke="#e0e0e0" stroke-width="2" stroke-linecap="round"/>
<!-- more -->
<g fill="#e0e0e0"><circle cx="14.5" cy="843.5" r="2.2"/><circle cx="22" cy="843.5" r="2.2"/><circle cx="29.5" cy="843.5" r="2.2"/></g>
<!-- small fg/bg -->
<rect x="7" y="872" width="9.5" height="8.5" fill="#fff" stroke="#101010" stroke-width="1"/>
<rect x="6.5" y="871.5" width="10.5" height="9.5" fill="none" stroke="#d0d0d0" stroke-width="0.8"/>
<rect x="2.5" y="867.5" width="9.5" height="9.5" fill="#000" stroke="#d0d0d0" stroke-width="1"/>
<path d="M31,868.5 C35,868.5 37.5,871 37.5,876" fill="none" stroke="#e0e0e0" stroke-width="2.4"/>
<path d="M27.5,868.5 L32,864.5 L32,872.5 Z M37.5,881 L33.5,876 L41.5,876 Z" fill="#e0e0e0"/>
<!-- swatches -->
<rect x="16.5" y="899.5" width="23" height="23" fill="#000" stroke="#2a2a2a" stroke-width="1"/>
<rect x="17.5" y="900.5" width="21" height="21" fill="#000" stroke="#fff" stroke-width="1.3"/>
<rect x="4.5" y="888" width="23" height="22.5" fill="#d4f8a2" stroke="#2e2e2e" stroke-width="1"/>
<rect x="5.3" y="888.8" width="21.4" height="21" fill="#d4f8a2" stroke="#fff" stroke-width="1.2"/>
<!-- quick mask -->
<rect x="11.5" y="938" width="20.5" height="16" fill="none" stroke="#e0e0e0" stroke-width="1.5"/>
<circle cx="21.5" cy="946" r="5" fill="none" stroke="#e0e0e0" stroke-width="1.1" stroke-dasharray="1,1.6"/>
<!-- screen mode -->
<rect x="11.5" y="974" width="14" height="11" fill="none" stroke="#e0e0e0" stroke-width="1.4"/>
<rect x="17.5" y="969" width="14.5" height="12" fill="#535353" stroke="#e0e0e0" stroke-width="1.4"/>
<rect x="17.5" y="969" width="14.5" height="2" fill="#e0e0e0"/>
<!-- last -->
<path d="M13,1016 L13,1012 L21,1007 L29,1012 M24,1007 L31,1007 L31,1014" fill="none" stroke="#e0e0e0" stroke-width="1.3"/>
</svg>

<div class="a" id="doc" style="left:418px;top:134px;width:886px;height:862px;background:#b3b3b3"></div>
<svg class="a" style="left:0;top:0" width="1918" height="1016" viewBox="0 0 1918 1016">
<defs>
<radialGradient id="bodyg" gradientUnits="userSpaceOnUse" cx="695" cy="750" r="210" gradientTransform="translate(695 750) rotate(21) scale(0.78 1) translate(-695 -750)">
<stop offset="0" stop-color="#1e0502"/><stop offset="0.25" stop-color="#2c0a04"/><stop offset="0.6" stop-color="#581d0b"/><stop offset="0.9" stop-color="#752811"/><stop offset="1" stop-color="#7b2b12"/>
</radialGradient>
<clipPath id="docclip"><rect x="418" y="134" width="886" height="862"/></clipPath>
</defs>
<g clip-path="url(#docclip)" stroke-linecap="round" stroke-linejoin="round" fill="none">
<g stroke="#0c0c0c" stroke-linecap="round"><line x1="516.0" y1="744.0" x2="516.0" y2="743.0" stroke-width="1.20"/><line x1="516.0" y1="743.0" x2="516.1" y2="741.8" stroke-width="1.32"/><line x1="516.1" y1="741.8" x2="516.1" y2="740.5" stroke-width="1.45"/><line x1="516.1" y1="740.5" x2="516.1" y2="738.9" stroke-width="1.57"/><line x1="516.1" y1="738.9" x2="516.2" y2="737.2" stroke-width="1.70"/><line x1="516.2" y1="737.2" x2="516.2" y2="735.4" stroke-width="1.82"/><line x1="516.2" y1="735.4" x2="516.2" y2="733.6" stroke-width="1.95"/><line x1="516.2" y1="733.6" x2="516.3" y2="731.6" stroke-width="2.07"/><line x1="516.3" y1="731.6" x2="516.4" y2="729.6" stroke-width="2.20"/><line x1="516.4" y1="729.6" x2="516.5" y2="727.6" stroke-width="2.32"/><line x1="516.5" y1="727.6" x2="516.6" y2="725.6" stroke-width="2.44"/><line x1="516.6" y1="725.6" x2="516.7" y2="723.7" stroke-width="2.57"/><line x1="516.7" y1="723.7" x2="516.8" y2="721.8" stroke-width="2.69"/><line x1="516.8" y1="721.8" x2="517.0" y2="720.0" stroke-width="2.82"/><line x1="517.0" y1="720.0" x2="517.2" y2="718.3" stroke-width="2.94"/><line x1="517.2" y1="718.3" x2="517.3" y2="716.7" stroke-width="3.07"/><line x1="517.3" y1="716.7" x2="517.5" y2="715.3" stroke-width="3.19"/><line x1="517.5" y1="715.3" x2="517.6" y2="713.8" stroke-width="3.32"/><line x1="517.6" y1="713.8" x2="517.8" y2="712.4" stroke-width="3.44"/><line x1="517.8" y1="712.4" x2="518.0" y2="710.9" stroke-width="3.52"/><line x1="518.0" y1="710.9" x2="518.2" y2="709.4" stroke-width="3.56"/><line x1="518.2" y1="709.4" x2="518.4" y2="707.9" stroke-width="3.61"/><line x1="518.4" y1="707.9" x2="518.7" y2="706.2" stroke-width="3.65"/><line x1="518.7" y1="706.2" x2="519.0" y2="704.4" stroke-width="3.69"/><line x1="519.0" y1="704.4" x2="519.4" y2="702.4" stroke-width="3.73"/><line x1="519.4" y1="702.4" x2="519.9" y2="700.2" stroke-width="3.78"/><line x1="519.9" y1="700.2" x2="520.4" y2="697.7" stroke-width="3.82"/><line x1="520.4" y1="697.7" x2="521.0" y2="695.0" stroke-width="3.86"/><line x1="521.0" y1="695.0" x2="521.7" y2="692.0" stroke-width="3.90"/><line x1="521.7" y1="692.0" x2="522.4" y2="688.8" stroke-width="3.95"/><line x1="522.4" y1="688.8" x2="523.2" y2="685.3" stroke-width="3.99"/><line x1="523.2" y1="685.3" x2="524.0" y2="681.7" stroke-width="4.03"/><line x1="524.0" y1="681.7" x2="524.9" y2="677.9" stroke-width="4.07"/><line x1="524.9" y1="677.9" x2="525.8" y2="673.9" stroke-width="4.11"/><line x1="525.8" y1="673.9" x2="526.8" y2="669.9" stroke-width="4.16"/><line x1="526.8" y1="669.9" x2="527.8" y2="665.7" stroke-width="4.20"/><line x1="527.8" y1="665.7" x2="528.9" y2="661.5" stroke-width="4.24"/><line x1="528.9" y1="661.5" x2="530.0" y2="657.2" stroke-width="4.28"/><line x1="530.0" y1="657.2" x2="531.2" y2="652.9" stroke-width="4.33"/><line x1="531.2" y1="652.9" x2="532.4" y2="648.5" stroke-width="4.37"/><line x1="532.4" y1="648.5" x2="533.7" y2="644.2" stroke-width="4.41"/><line x1="533.7" y1="644.2" x2="535.0" y2="640.0" stroke-width="4.45"/><line x1="535.0" y1="640.0" x2="536.4" y2="635.7" stroke-width="4.50"/><line x1="536.4" y1="635.7" x2="537.9" y2="631.3" stroke-width="4.54"/><line x1="537.9" y1="631.3" x2="539.4" y2="626.8" stroke-width="4.58"/><line x1="539.4" y1="626.8" x2="541.1" y2="622.3" stroke-width="4.62"/><line x1="541.1" y1="622.3" x2="542.8" y2="617.6" stroke-width="4.67"/><line x1="542.8" y1="617.6" x2="544.5" y2="613.0" stroke-width="4.71"/><line x1="544.5" y1="613.0" x2="546.2" y2="608.3" stroke-width="4.75"/><line x1="546.2" y1="608.3" x2="548.0" y2="603.7" stroke-width="4.79"/><line x1="548.0" y1="603.7" x2="549.9" y2="599.0" stroke-width="4.83"/><line x1="549.9" y1="599.0" x2="551.7" y2="594.4" stroke-width="4.88"/><line x1="551.7" y1="594.4" x2="553.5" y2="589.9" stroke-width="4.92"/><line x1="553.5" y1="589.9" x2="555.4" y2="585.5" stroke-width="4.96"/><line x1="555.4" y1="585.5" x2="557.2" y2="581.2" stroke-width="5.00"/><line x1="557.2" y1="581.2" x2="559.0" y2="577.0" stroke-width="4.98"/><line x1="559.0" y1="577.0" x2="560.8" y2="572.9" stroke-width="4.97"/><line x1="560.8" y1="572.9" x2="562.5" y2="568.9" stroke-width="4.95"/><line x1="562.5" y1="568.9" x2="564.3" y2="565.0" stroke-width="4.94"/><line x1="564.3" y1="565.0" x2="566.1" y2="561.1" stroke-width="4.92"/><line x1="566.1" y1="561.1" x2="567.9" y2="557.3" stroke-width="4.90"/><line x1="567.9" y1="557.3" x2="569.6" y2="553.6" stroke-width="4.89"/><line x1="569.6" y1="553.6" x2="571.4" y2="549.9" stroke-width="4.87"/><line x1="571.4" y1="549.9" x2="573.3" y2="546.2" stroke-width="4.86"/><line x1="573.3" y1="546.2" x2="575.1" y2="542.6" stroke-width="4.84"/><line x1="575.1" y1="542.6" x2="577.0" y2="539.0" stroke-width="4.83"/><line x1="577.0" y1="539.0" x2="578.9" y2="535.5" stroke-width="4.81"/><line x1="578.9" y1="535.5" x2="580.9" y2="532.0" stroke-width="4.80"/><line x1="580.9" y1="532.0" x2="582.9" y2="528.5" stroke-width="4.78"/><line x1="582.9" y1="528.5" x2="585.0" y2="525.0" stroke-width="4.76"/><line x1="585.0" y1="525.0" x2="587.1" y2="521.6" stroke-width="4.75"/><line x1="587.1" y1="521.6" x2="589.3" y2="518.2" stroke-width="4.73"/><line x1="589.3" y1="518.2" x2="591.4" y2="514.8" stroke-width="4.72"/><line x1="591.4" y1="514.8" x2="593.7" y2="511.5" stroke-width="4.70"/><line x1="593.7" y1="511.5" x2="595.9" y2="508.3" stroke-width="4.69"/><line x1="595.9" y1="508.3" x2="598.2" y2="505.1" stroke-width="4.67"/><line x1="598.2" y1="505.1" x2="600.5" y2="501.9" stroke-width="4.66"/><line x1="600.5" y1="501.9" x2="602.9" y2="498.7" stroke-width="4.64"/><line x1="602.9" y1="498.7" x2="605.3" y2="495.6" stroke-width="4.62"/><line x1="605.3" y1="495.6" x2="607.7" y2="492.4" stroke-width="4.61"/><line x1="607.7" y1="492.4" x2="610.2" y2="489.3" stroke-width="4.59"/><line x1="610.2" y1="489.3" x2="612.8" y2="486.2" stroke-width="4.58"/><line x1="612.8" y1="486.2" x2="615.3" y2="483.1" stroke-width="4.56"/><line x1="615.3" y1="483.1" x2="618.0" y2="480.0" stroke-width="4.55"/><line x1="618.0" y1="480.0" x2="620.7" y2="476.9" stroke-width="4.53"/><line x1="620.7" y1="476.9" x2="623.4" y2="473.7" stroke-width="4.52"/><line x1="623.4" y1="473.7" x2="626.1" y2="470.5" stroke-width="4.50"/><line x1="626.1" y1="470.5" x2="628.9" y2="467.2" stroke-width="4.48"/><line x1="628.9" y1="467.2" x2="631.7" y2="464.0" stroke-width="4.47"/><line x1="631.7" y1="464.0" x2="634.5" y2="460.8" stroke-width="4.45"/><line x1="634.5" y1="460.8" x2="637.4" y2="457.6" stroke-width="4.44"/><line x1="637.4" y1="457.6" x2="640.4" y2="454.5" stroke-width="4.42"/><line x1="640.4" y1="454.5" x2="643.5" y2="451.5" stroke-width="4.41"/><line x1="643.5" y1="451.5" x2="646.6" y2="448.5" stroke-width="4.38"/><line x1="646.6" y1="448.5" x2="649.8" y2="445.7" stroke-width="4.36"/><line x1="649.8" y1="445.7" x2="653.1" y2="443.0" stroke-width="4.33"/><line x1="653.1" y1="443.0" x2="656.5" y2="440.4" stroke-width="4.31"/><line x1="656.5" y1="440.4" x2="660.0" y2="438.0" stroke-width="4.28"/><line x1="660.0" y1="438.0" x2="663.7" y2="435.7" stroke-width="4.25"/><line x1="663.7" y1="435.7" x2="667.7" y2="433.4" stroke-width="4.23"/><line x1="667.7" y1="433.4" x2="671.8" y2="431.2" stroke-width="4.20"/><line x1="671.8" y1="431.2" x2="676.1" y2="429.0" stroke-width="4.18"/><line x1="676.1" y1="429.0" x2="680.6" y2="426.9" stroke-width="4.15"/><line x1="680.6" y1="426.9" x2="685.0" y2="424.9" stroke-width="4.12"/><line x1="685.0" y1="424.9" x2="689.6" y2="423.1" stroke-width="4.10"/><line x1="689.6" y1="423.1" x2="694.1" y2="421.3" stroke-width="4.07"/><line x1="694.1" y1="421.3" x2="698.5" y2="419.8" stroke-width="4.05"/><line x1="698.5" y1="419.8" x2="702.8" y2="418.4" stroke-width="4.02"/><line x1="702.8" y1="418.4" x2="706.9" y2="417.2" stroke-width="3.99"/><line x1="706.9" y1="417.2" x2="710.9" y2="416.2" stroke-width="3.97"/><line x1="710.9" y1="416.2" x2="714.6" y2="415.5" stroke-width="3.94"/><line x1="714.6" y1="415.5" x2="718.0" y2="415.0" stroke-width="3.92"/><line x1="718.0" y1="415.0" x2="721.2" y2="414.8" stroke-width="3.89"/><line x1="721.2" y1="414.8" x2="724.1" y2="414.9" stroke-width="3.86"/><line x1="724.1" y1="414.9" x2="727.0" y2="415.2" stroke-width="3.84"/><line x1="727.0" y1="415.2" x2="729.7" y2="415.8" stroke-width="3.81"/><line x1="729.7" y1="415.8" x2="732.2" y2="416.6" stroke-width="3.79"/><line x1="732.2" y1="416.6" x2="734.6" y2="417.6" stroke-width="3.76"/><line x1="734.6" y1="417.6" x2="736.9" y2="418.7" stroke-width="3.74"/><line x1="736.9" y1="418.7" x2="739.1" y2="419.9" stroke-width="3.71"/><line x1="739.1" y1="419.9" x2="741.3" y2="421.2" stroke-width="3.68"/><line x1="741.3" y1="421.2" x2="743.3" y2="422.6" stroke-width="3.66"/><line x1="743.3" y1="422.6" x2="745.3" y2="424.0" stroke-width="3.63"/><line x1="745.3" y1="424.0" x2="747.2" y2="425.4" stroke-width="3.61"/><line x1="747.2" y1="425.4" x2="749.1" y2="426.7" stroke-width="3.57"/><line x1="749.1" y1="426.7" x2="751.0" y2="428.0" stroke-width="3.54"/><line x1="751.0" y1="428.0" x2="752.8" y2="429.3" stroke-width="3.51"/><line x1="752.8" y1="429.3" x2="754.5" y2="430.6" stroke-width="3.48"/><line x1="754.5" y1="430.6" x2="756.1" y2="432.0" stroke-width="3.44"/><line x1="756.1" y1="432.0" x2="757.6" y2="433.4" stroke-width="3.41"/><line x1="757.6" y1="433.4" x2="759.1" y2="434.9" stroke-width="3.38"/><line x1="759.1" y1="434.9" x2="760.4" y2="436.4" stroke-width="3.35"/><line x1="760.4" y1="436.4" x2="761.8" y2="437.9" stroke-width="3.31"/><line x1="761.8" y1="437.9" x2="763.0" y2="439.5" stroke-width="3.28"/><line x1="763.0" y1="439.5" x2="764.2" y2="441.2" stroke-width="3.25"/><line x1="764.2" y1="441.2" x2="765.4" y2="442.9" stroke-width="3.22"/><line x1="765.4" y1="442.9" x2="766.6" y2="444.6" stroke-width="3.18"/><line x1="766.6" y1="444.6" x2="767.7" y2="446.4" stroke-width="3.15"/><line x1="767.7" y1="446.4" x2="768.9" y2="448.2" stroke-width="3.12"/><line x1="768.9" y1="448.2" x2="770.0" y2="450.0" stroke-width="3.09"/><line x1="770.0" y1="450.0" x2="771.1" y2="452.0" stroke-width="3.05"/><line x1="771.1" y1="452.0" x2="772.3" y2="454.1" stroke-width="3.02"/><line x1="772.3" y1="454.1" x2="773.4" y2="456.4" stroke-width="2.99"/><line x1="773.4" y1="456.4" x2="774.5" y2="458.9" stroke-width="2.96"/><line x1="774.5" y1="458.9" x2="775.6" y2="461.4" stroke-width="2.92"/><line x1="775.6" y1="461.4" x2="776.7" y2="463.9" stroke-width="2.89"/><line x1="776.7" y1="463.9" x2="777.7" y2="466.4" stroke-width="2.86"/><line x1="777.7" y1="466.4" x2="778.7" y2="468.8" stroke-width="2.83"/><line x1="778.7" y1="468.8" x2="779.6" y2="471.2" stroke-width="2.79"/><line x1="779.6" y1="471.2" x2="780.4" y2="473.4" stroke-width="2.76"/><line x1="780.4" y1="473.4" x2="781.2" y2="475.4" stroke-width="2.73"/><line x1="781.2" y1="475.4" x2="781.9" y2="477.2" stroke-width="2.70"/><line x1="781.9" y1="477.2" x2="782.5" y2="478.8" stroke-width="2.66"/><line x1="782.5" y1="478.8" x2="783.0" y2="480.0" stroke-width="2.63"/></g>
<g stroke="#0c0c0c" stroke-linecap="round"><line x1="843.0" y1="497.0" x2="843.5" y2="496.1" stroke-width="2.60"/><line x1="843.5" y1="496.1" x2="844.1" y2="495.1" stroke-width="2.64"/><line x1="844.1" y1="495.1" x2="844.8" y2="493.9" stroke-width="2.68"/><line x1="844.8" y1="493.9" x2="845.5" y2="492.5" stroke-width="2.72"/><line x1="845.5" y1="492.5" x2="846.2" y2="491.1" stroke-width="2.76"/><line x1="846.2" y1="491.1" x2="847.0" y2="489.5" stroke-width="2.79"/><line x1="847.0" y1="489.5" x2="847.9" y2="487.8" stroke-width="2.83"/><line x1="847.9" y1="487.8" x2="848.8" y2="486.1" stroke-width="2.87"/><line x1="848.8" y1="486.1" x2="849.7" y2="484.3" stroke-width="2.91"/><line x1="849.7" y1="484.3" x2="850.7" y2="482.4" stroke-width="2.95"/><line x1="850.7" y1="482.4" x2="851.8" y2="480.6" stroke-width="2.99"/><line x1="851.8" y1="480.6" x2="852.8" y2="478.7" stroke-width="3.03"/><line x1="852.8" y1="478.7" x2="853.9" y2="476.8" stroke-width="3.07"/><line x1="853.9" y1="476.8" x2="855.0" y2="474.9" stroke-width="3.11"/><line x1="855.0" y1="474.9" x2="856.2" y2="473.0" stroke-width="3.15"/><line x1="856.2" y1="473.0" x2="857.4" y2="471.2" stroke-width="3.18"/><line x1="857.4" y1="471.2" x2="858.6" y2="469.4" stroke-width="3.22"/><line x1="858.6" y1="469.4" x2="859.9" y2="467.7" stroke-width="3.26"/><line x1="859.9" y1="467.7" x2="861.1" y2="466.1" stroke-width="3.30"/><line x1="861.1" y1="466.1" x2="862.4" y2="464.6" stroke-width="3.34"/><line x1="862.4" y1="464.6" x2="863.7" y2="463.3" stroke-width="3.38"/><line x1="863.7" y1="463.3" x2="865.0" y2="462.0" stroke-width="3.42"/><line x1="865.0" y1="462.0" x2="866.3" y2="460.8" stroke-width="3.46"/><line x1="866.3" y1="460.8" x2="867.7" y2="459.6" stroke-width="3.50"/><line x1="867.7" y1="459.6" x2="869.0" y2="458.4" stroke-width="3.54"/><line x1="869.0" y1="458.4" x2="870.4" y2="457.1" stroke-width="3.57"/><line x1="870.4" y1="457.1" x2="871.9" y2="455.9" stroke-width="3.61"/><line x1="871.9" y1="455.9" x2="873.3" y2="454.7" stroke-width="3.65"/><line x1="873.3" y1="454.7" x2="874.8" y2="453.5" stroke-width="3.69"/><line x1="874.8" y1="453.5" x2="876.3" y2="452.3" stroke-width="3.73"/><line x1="876.3" y1="452.3" x2="877.8" y2="451.2" stroke-width="3.77"/><line x1="877.8" y1="451.2" x2="879.3" y2="450.2" stroke-width="3.80"/><line x1="879.3" y1="450.2" x2="880.9" y2="449.2" stroke-width="3.82"/><line x1="880.9" y1="449.2" x2="882.6" y2="448.3" stroke-width="3.84"/><line x1="882.6" y1="448.3" x2="884.2" y2="447.4" stroke-width="3.86"/><line x1="884.2" y1="447.4" x2="885.9" y2="446.7" stroke-width="3.88"/><line x1="885.9" y1="446.7" x2="887.7" y2="446.0" stroke-width="3.90"/><line x1="887.7" y1="446.0" x2="889.4" y2="445.5" stroke-width="3.92"/><line x1="889.4" y1="445.5" x2="891.2" y2="445.0" stroke-width="3.93"/><line x1="891.2" y1="445.0" x2="893.1" y2="444.7" stroke-width="3.95"/><line x1="893.1" y1="444.7" x2="895.0" y2="444.6" stroke-width="3.97"/><line x1="895.0" y1="444.6" x2="897.0" y2="444.6" stroke-width="3.99"/><line x1="897.0" y1="444.6" x2="899.0" y2="444.7" stroke-width="4.01"/><line x1="899.0" y1="444.7" x2="901.0" y2="445.0" stroke-width="4.03"/><line x1="901.0" y1="445.0" x2="903.1" y2="445.4" stroke-width="4.04"/><line x1="903.1" y1="445.4" x2="905.4" y2="446.0" stroke-width="4.06"/><line x1="905.4" y1="446.0" x2="907.7" y2="446.6" stroke-width="4.08"/><line x1="907.7" y1="446.6" x2="910.1" y2="447.3" stroke-width="4.10"/><line x1="910.1" y1="447.3" x2="912.6" y2="448.1" stroke-width="4.12"/><line x1="912.6" y1="448.1" x2="915.1" y2="449.1" stroke-width="4.14"/><line x1="915.1" y1="449.1" x2="917.8" y2="450.1" stroke-width="4.16"/><line x1="917.8" y1="450.1" x2="920.4" y2="451.3" stroke-width="4.17"/><line x1="920.4" y1="451.3" x2="923.1" y2="452.5" stroke-width="4.19"/><line x1="923.1" y1="452.5" x2="925.8" y2="453.9" stroke-width="4.21"/><line x1="925.8" y1="453.9" x2="928.5" y2="455.3" stroke-width="4.23"/><line x1="928.5" y1="455.3" x2="931.2" y2="456.9" stroke-width="4.25"/><line x1="931.2" y1="456.9" x2="933.9" y2="458.6" stroke-width="4.27"/><line x1="933.9" y1="458.6" x2="936.6" y2="460.4" stroke-width="4.29"/><line x1="936.6" y1="460.4" x2="939.2" y2="462.3" stroke-width="4.30"/><line x1="939.2" y1="462.3" x2="941.9" y2="464.3" stroke-width="4.32"/><line x1="941.9" y1="464.3" x2="944.4" y2="466.5" stroke-width="4.34"/><line x1="944.4" y1="466.5" x2="946.9" y2="468.7" stroke-width="4.36"/><line x1="946.9" y1="468.7" x2="949.3" y2="471.1" stroke-width="4.38"/><line x1="949.3" y1="471.1" x2="951.6" y2="473.6" stroke-width="4.40"/><line x1="951.6" y1="473.6" x2="953.9" y2="476.2" stroke-width="4.42"/><line x1="953.9" y1="476.2" x2="956.0" y2="479.0" stroke-width="4.43"/><line x1="956.0" y1="479.0" x2="958.0" y2="481.9" stroke-width="4.45"/><line x1="958.0" y1="481.9" x2="960.1" y2="485.0" stroke-width="4.47"/><line x1="960.1" y1="485.0" x2="962.0" y2="488.2" stroke-width="4.49"/><line x1="962.0" y1="488.2" x2="964.0" y2="491.5" stroke-width="4.51"/><line x1="964.0" y1="491.5" x2="965.9" y2="495.0" stroke-width="4.53"/><line x1="965.9" y1="495.0" x2="967.7" y2="498.6" stroke-width="4.55"/><line x1="967.7" y1="498.6" x2="969.6" y2="502.4" stroke-width="4.56"/><line x1="969.6" y1="502.4" x2="971.3" y2="506.2" stroke-width="4.58"/><line x1="971.3" y1="506.2" x2="973.1" y2="510.2" stroke-width="4.60"/><line x1="973.1" y1="510.2" x2="974.8" y2="514.3" stroke-width="4.62"/><line x1="974.8" y1="514.3" x2="976.4" y2="518.4" stroke-width="4.64"/><line x1="976.4" y1="518.4" x2="978.1" y2="522.7" stroke-width="4.66"/><line x1="978.1" y1="522.7" x2="979.6" y2="527.1" stroke-width="4.68"/><line x1="979.6" y1="527.1" x2="981.2" y2="531.5" stroke-width="4.69"/><line x1="981.2" y1="531.5" x2="982.7" y2="536.0" stroke-width="4.71"/><line x1="982.7" y1="536.0" x2="984.1" y2="540.6" stroke-width="4.73"/><line x1="984.1" y1="540.6" x2="985.6" y2="545.2" stroke-width="4.75"/><line x1="985.6" y1="545.2" x2="986.9" y2="549.9" stroke-width="4.77"/><line x1="986.9" y1="549.9" x2="988.3" y2="554.6" stroke-width="4.79"/><line x1="988.3" y1="554.6" x2="989.5" y2="559.4" stroke-width="4.79"/><line x1="989.5" y1="559.4" x2="990.8" y2="564.2" stroke-width="4.77"/><line x1="990.8" y1="564.2" x2="992.0" y2="569.0" stroke-width="4.75"/><line x1="992.0" y1="569.0" x2="993.2" y2="573.9" stroke-width="4.73"/><line x1="993.2" y1="573.9" x2="994.3" y2="579.0" stroke-width="4.71"/><line x1="994.3" y1="579.0" x2="995.4" y2="584.2" stroke-width="4.69"/><line x1="995.4" y1="584.2" x2="996.4" y2="589.6" stroke-width="4.67"/><line x1="996.4" y1="589.6" x2="997.5" y2="595.1" stroke-width="4.65"/><line x1="997.5" y1="595.1" x2="998.4" y2="600.7" stroke-width="4.63"/><line x1="998.4" y1="600.7" x2="999.4" y2="606.4" stroke-width="4.61"/><line x1="999.4" y1="606.4" x2="1000.3" y2="612.1" stroke-width="4.59"/><line x1="1000.3" y1="612.1" x2="1001.1" y2="617.9" stroke-width="4.57"/><line x1="1001.1" y1="617.9" x2="1001.9" y2="623.7" stroke-width="4.54"/><line x1="1001.9" y1="623.7" x2="1002.7" y2="629.6" stroke-width="4.52"/><line x1="1002.7" y1="629.6" x2="1003.4" y2="635.5" stroke-width="4.50"/><line x1="1003.4" y1="635.5" x2="1004.1" y2="641.4" stroke-width="4.48"/><line x1="1004.1" y1="641.4" x2="1004.7" y2="647.3" stroke-width="4.46"/><line x1="1004.7" y1="647.3" x2="1005.3" y2="653.1" stroke-width="4.44"/><line x1="1005.3" y1="653.1" x2="1005.8" y2="658.9" stroke-width="4.42"/><line x1="1005.8" y1="658.9" x2="1006.3" y2="664.7" stroke-width="4.40"/><line x1="1006.3" y1="664.7" x2="1006.8" y2="670.3" stroke-width="4.38"/><line x1="1006.8" y1="670.3" x2="1007.1" y2="675.9" stroke-width="4.36"/><line x1="1007.1" y1="675.9" x2="1007.5" y2="681.4" stroke-width="4.34"/><line x1="1007.5" y1="681.4" x2="1007.8" y2="686.8" stroke-width="4.32"/><line x1="1007.8" y1="686.8" x2="1008.0" y2="692.0" stroke-width="4.30"/><line x1="1008.0" y1="692.0" x2="1008.2" y2="697.2" stroke-width="4.27"/><line x1="1008.2" y1="697.2" x2="1008.3" y2="702.3" stroke-width="4.25"/><line x1="1008.3" y1="702.3" x2="1008.3" y2="707.5" stroke-width="4.23"/><line x1="1008.3" y1="707.5" x2="1008.2" y2="712.6" stroke-width="4.21"/><line x1="1008.2" y1="712.6" x2="1008.1" y2="717.7" stroke-width="4.19"/><line x1="1008.1" y1="717.7" x2="1008.0" y2="722.8" stroke-width="4.17"/><line x1="1008.0" y1="722.8" x2="1007.8" y2="727.9" stroke-width="4.15"/><line x1="1007.8" y1="727.9" x2="1007.5" y2="732.9" stroke-width="4.13"/><line x1="1007.5" y1="732.9" x2="1007.2" y2="737.9" stroke-width="4.11"/><line x1="1007.2" y1="737.9" x2="1006.9" y2="742.9" stroke-width="4.09"/><line x1="1006.9" y1="742.9" x2="1006.5" y2="747.8" stroke-width="4.07"/><line x1="1006.5" y1="747.8" x2="1006.1" y2="752.6" stroke-width="4.05"/><line x1="1006.1" y1="752.6" x2="1005.6" y2="757.3" stroke-width="4.02"/><line x1="1005.6" y1="757.3" x2="1005.2" y2="762.0" stroke-width="4.00"/><line x1="1005.2" y1="762.0" x2="1004.7" y2="766.6" stroke-width="3.94"/><line x1="1004.7" y1="766.6" x2="1004.2" y2="771.1" stroke-width="3.87"/><line x1="1004.2" y1="771.1" x2="1003.7" y2="775.5" stroke-width="3.80"/><line x1="1003.7" y1="775.5" x2="1003.1" y2="779.8" stroke-width="3.73"/><line x1="1003.1" y1="779.8" x2="1002.6" y2="784.1" stroke-width="3.66"/><line x1="1002.6" y1="784.1" x2="1002.1" y2="788.2" stroke-width="3.59"/><line x1="1002.1" y1="788.2" x2="1001.5" y2="792.1" stroke-width="3.52"/><line x1="1001.5" y1="792.1" x2="1001.0" y2="796.0" stroke-width="3.45"/><line x1="1001.0" y1="796.0" x2="1000.4" y2="799.8" stroke-width="3.38"/><line x1="1000.4" y1="799.8" x2="999.8" y2="803.5" stroke-width="3.31"/><line x1="999.8" y1="803.5" x2="999.1" y2="807.2" stroke-width="3.24"/><line x1="999.1" y1="807.2" x2="998.4" y2="810.8" stroke-width="3.17"/><line x1="998.4" y1="810.8" x2="997.7" y2="814.4" stroke-width="3.10"/><line x1="997.7" y1="814.4" x2="996.9" y2="817.8" stroke-width="3.03"/><line x1="996.9" y1="817.8" x2="996.0" y2="821.3" stroke-width="2.97"/><line x1="996.0" y1="821.3" x2="995.2" y2="824.6" stroke-width="2.90"/><line x1="995.2" y1="824.6" x2="994.3" y2="827.8" stroke-width="2.83"/><line x1="994.3" y1="827.8" x2="993.4" y2="831.0" stroke-width="2.76"/><line x1="993.4" y1="831.0" x2="992.6" y2="834.0" stroke-width="2.69"/><line x1="992.6" y1="834.0" x2="991.7" y2="836.9" stroke-width="2.62"/><line x1="991.7" y1="836.9" x2="990.8" y2="839.8" stroke-width="2.48"/><line x1="990.8" y1="839.8" x2="990.0" y2="842.5" stroke-width="2.34"/><line x1="990.0" y1="842.5" x2="989.2" y2="845.0" stroke-width="2.19"/><line x1="989.2" y1="845.0" x2="988.5" y2="847.5" stroke-width="2.04"/><line x1="988.5" y1="847.5" x2="987.7" y2="849.8" stroke-width="1.89"/><line x1="987.7" y1="849.8" x2="987.1" y2="851.9" stroke-width="1.74"/><line x1="987.1" y1="851.9" x2="986.4" y2="853.9" stroke-width="1.59"/><line x1="986.4" y1="853.9" x2="985.9" y2="855.8" stroke-width="1.45"/><line x1="985.9" y1="855.8" x2="985.4" y2="857.5" stroke-width="1.30"/><line x1="985.4" y1="857.5" x2="985.0" y2="859.0" stroke-width="1.15"/></g>
<g stroke="#080808" stroke-width="21.5" stroke-linejoin="miter"><polyline points="642,576 621,573 576,599"/><polyline points="589,670 549,726"/><polyline points="586,812 557,819 540,880"/><polyline points="858,633 897,621 922,668"/><polyline points="850,740 886,749 899,798"/><polyline points="773,858 796,890 770,940"/></g>
<g stroke="#7a2b12" stroke-width="14" stroke-linejoin="miter"><polyline points="642,576 621,573 576,599"/><polyline points="589,670 549,726"/><polyline points="586,812 557,819 540,880"/><polyline points="858,633 897,621 922,668"/><polyline points="850,740 886,749 899,798"/><polyline points="773,858 796,890 770,940"/></g>
<g stroke="#f4f4f4" stroke-width="2.6" stroke-linejoin="miter"><path d="M642.9,569.9 L619.8,566.6 L578.5,590.4"/><path d="M584.0,666.4 L548.8,715.7"/><path d="M584.5,806.0 L552.0,813.8 L536.2,870.6"/><path d="M856.2,627.1 L900.1,613.6 L924.2,658.9"/><path d="M851.5,734.0 L891.1,743.9 L903.3,790.1"/><path d="M778.0,854.4 L803.3,889.5 L778.8,936.5"/></g>
<path d="M790.0,481.0 C803.7,483.2 821.7,488.8 832.0,497.0 C842.3,505.2 847.3,516.2 852.0,530.0 C856.7,543.8 858.5,559.2 860.0,580.0 C861.5,600.8 862.3,630.0 861.0,655.0 C859.7,680.0 855.8,710.5 852.0,730.0 C848.2,749.5 844.2,757.3 838.0,772.0 C831.8,786.7 825.2,804.5 815.0,818.0 C804.8,831.5 789.5,843.3 777.0,853.0 C764.5,862.7 752.0,870.0 740.0,876.0 C728.0,882.0 717.5,886.5 705.0,889.0 C692.5,891.5 676.7,891.8 665.0,891.0 C653.3,890.2 643.8,887.5 635.0,884.0 C626.2,880.5 618.5,875.8 612.0,870.0 C605.5,864.2 600.8,857.2 596.0,849.0 C591.2,840.8 586.0,830.5 583.0,821.0 C580.0,811.5 579.0,803.2 578.0,792.0 C577.0,780.8 576.0,768.2 577.0,754.0 C578.0,739.8 580.8,721.0 584.0,707.0 C587.2,693.0 591.7,682.8 596.0,670.0 C600.3,657.2 605.0,641.8 610.0,630.0 C615.0,618.2 620.2,609.5 626.0,599.0 C631.8,588.5 637.2,578.2 645.0,567.0 C652.8,555.8 662.2,543.2 673.0,532.0 C683.8,520.8 697.2,508.0 710.0,500.0 C722.8,492.0 736.7,487.2 750.0,484.0 C763.3,480.8 776.3,478.8 790.0,481.0Z" fill="url(#bodyg)" stroke="#080808" stroke-width="5"/>
<path d="M672.0,539.0 C667.5,544.5 652.7,561.2 645.0,572.0 C637.3,582.8 631.7,593.3 626.0,604.0 C620.3,614.7 615.3,625.0 611.0,636.0 C606.7,647.0 603.5,658.3 600.0,670.0 C596.5,681.7 591.7,700.0 590.0,706.0" stroke="#e4e4e4" stroke-width="2.8"/>
<path d="M858,590 C858,620 857,660 853,700" stroke="#d8d8d8" stroke-width="1.5" opacity="0.8"/>
<path d="M640,571 C690,579 760,598 857,645" stroke="#0a0a0a" stroke-width="4"/>
<path d="M745,598 C720,660 680,770 644,886" stroke="#0a0a0a" stroke-width="3.4"/>
<ellipse cx="721" cy="515" rx="47" ry="43" fill="#fff" stroke="#080808" stroke-width="5"/>
<ellipse cx="731" cy="519" rx="38" ry="37" fill="#050505"/>
<circle cx="754" cy="504" r="11" fill="#7a2b12"/><circle cx="755" cy="503" r="8" fill="#fff"/>
<circle cx="709" cy="540" r="10" fill="#7a2b12"/><circle cx="708" cy="541" r="7.5" fill="#fff"/>
<circle cx="721" cy="518" r="3.5" fill="#4a180a"/>
<ellipse cx="734" cy="533" rx="9" ry="11.5" fill="#4a180a" transform="rotate(-20 734 533)"/>
<ellipse cx="823" cy="543" rx="47" ry="42" fill="#fff" stroke="#080808" stroke-width="5" transform="rotate(20 823 543)"/>
<ellipse cx="815" cy="542" rx="39" ry="38" fill="#050505"/>
<ellipse cx="841" cy="527" rx="11" ry="14" fill="#7a2b12"/><ellipse cx="842" cy="527" rx="8" ry="11" fill="#fff"/>
<circle cx="795" cy="563" r="10" fill="#7a2b12"/><ellipse cx="794" cy="564" rx="7" ry="8" fill="#fff"/>
<circle cx="803" cy="541" r="4" fill="#4a180a"/>
<ellipse cx="816" cy="556" rx="10" ry="12" fill="#4a180a" transform="rotate(-20 816 556)"/>
</g></svg>
<div class="a" style="left:1898px;top:113px;width:20px;height:883px;background:#4a4a4a"></div>
<div class="a" style="left:1304px;top:134px;width:2px;height:852px;background:#262626"></div>
<div class="a" style="left:1305px;top:120px;width:364px;height:865px;background:#535353;border-radius:5px 5px 0 0;overflow:hidden">
<div class="a" style="left:0;top:0;width:364px;height:52px;background:#434343"></div>
<div class="a" style="left:0;top:16px;width:364px;height:1px;background:#3e3e3e"></div>
</div>
<div class="a" style="left:1332px;top:137px;width:1px;height:34px;background:#3d3d3d"></div>
<div class="a" style="left:1315px;top:146px;width:16px;height:16px;overflow:hidden"><div class="t" style="left:0;top:0;font-size:14px;color:#bcbcbc">內板</div></div>
<div class="a" style="left:1359px;top:137px;width:1px;height:34px;background:#3d3d3d"></div>
<div class="a" style="left:1343px;top:146px;width:15px;height:16px;overflow:hidden"><div class="t" style="left:0;top:0;font-size:14px;color:#bcbcbc">步板</div></div>
<div class="a" style="left:1385px;top:137px;width:1px;height:34px;background:#3d3d3d"></div>
<div class="a" style="left:1370px;top:146px;width:14px;height:16px;overflow:hidden"><div class="t" style="left:0;top:0;font-size:14px;color:#bcbcbc">調板</div></div>
<div class="a" style="left:1412px;top:137px;width:1px;height:34px;background:#3d3d3d"></div>
<div class="a" style="left:1396px;top:146px;width:15px;height:16px;overflow:hidden"><div class="t" style="left:0;top:0;font-size:14px;color:#bcbcbc">資板</div></div>
<div class="a" style="left:1412px;top:137px;width:48px;height:35px;background:#535353"></div>
<div class="t" style="left:1422px;top:146px;font-size:14px;color:#f4f4f4">圖層</div>
<div class="a" style="left:1486px;top:137px;width:1px;height:34px;background:#3d3d3d"></div>
<div class="a" style="left:1470px;top:146px;width:15px;height:16px;overflow:hidden"><div class="t" style="left:0;top:0;font-size:14px;color:#bcbcbc">顏板</div></div>
<div class="a" style="left:1513px;top:137px;width:1px;height:34px;background:#3d3d3d"></div>
<div class="a" style="left:1497px;top:146px;width:15px;height:16px;overflow:hidden"><div class="t" style="left:0;top:0;font-size:14px;color:#bcbcbc">色板</div></div>
<div class="a" style="left:1539px;top:137px;width:1px;height:34px;background:#3d3d3d"></div>
<div class="a" style="left:1524px;top:146px;width:14px;height:16px;overflow:hidden"><div class="t" style="left:0;top:0;font-size:14px;color:#bcbcbc">漸板</div></div>
<div class="a" style="left:1565px;top:137px;width:1px;height:34px;background:#3d3d3d"></div>
<div class="a" style="left:1550px;top:146px;width:14px;height:16px;overflow:hidden"><div class="t" style="left:0;top:0;font-size:14px;color:#bcbcbc">圖板</div></div>
<div class="a" style="left:1591px;top:137px;width:1px;height:34px;background:#3d3d3d"></div>
<div class="a" style="left:1576px;top:146px;width:14px;height:16px;overflow:hidden"><div class="t" style="left:0;top:0;font-size:14px;color:#bcbcbc">色板</div></div>
<div class="a" style="left:1625px;top:137px;width:1px;height:34px;background:#3d3d3d"></div>
<div class="a" style="left:1602px;top:146px;width:22px;height:16px;overflow:hidden"><div class="t" style="left:0;top:0;font-size:14px;color:#bcbcbc">路徑板</div></div>
<svg style="left:0;top:0" width="1918" height="1016" viewBox="0 0 1918 1016">
<path d="M1636,126 L1633.5,128.5 L1636,131 M1640,126 L1637.5,128.5 L1640,131" fill="none" stroke="#e6e6e6" stroke-width="1.5"/>
<path d="M1655.5,124.5 L1663,132.5 M1663,124.5 L1655.5,132.5" stroke="#e6e6e6" stroke-width="2"/>
<g fill="#d6d6d6"><rect x="1653" y="149.5" width="11" height="1.2"/><rect x="1653" y="152" width="11" height="1.2"/><rect x="1653" y="154.5" width="11" height="1.2"/><rect x="1653" y="157" width="11" height="1.2"/></g>
</svg>
<div class="a" style="left:1305px;top:211px;width:364px;height:2px;background:#4a4a4a"></div>
<div class="a" style="left:1305px;top:247px;width:364px;height:2px;background:#4a4a4a"></div>
<div class="a" style="left:1311px;top:183px;width:113px;height:26px;background:#434343;border:1px solid #3e3e3e;border-radius:3px"></div>
<div class="t" style="left:1339px;top:188px;font-size:14px;color:#f0f0f0">種類</div>
<svg style="left:0;top:0" width="1918" height="1016" viewBox="0 0 1918 1016">
<circle cx="1326" cy="195" r="4.2" fill="none" stroke="#e6e6e6" stroke-width="1.6"/><path d="M1329,198 L1332,201.5" stroke="#e6e6e6" stroke-width="2" stroke-linecap="round"/>
<path d="M1411,196 L1415,200 L1419,196" fill="none" stroke="#d0d0d0" stroke-width="1.1"/>
<rect x="1443.5" y="189.5" width="13" height="11" fill="none" stroke="#dcdcdc" stroke-width="1.3"/><path d="M1446,198.5 L1448.5,194.5 L1450,196.5 L1452,193.5 L1455,198.5 Z" fill="#dcdcdc"/>
<circle cx="1480" cy="195" r="6" fill="#dcdcdc"/><path d="M1475.8,199.2 L1484.2,190.8 A6,6 0 0 0 1475.8,199.2 Z" fill="#535353"/><circle cx="1480" cy="195" r="5.4" fill="none" stroke="#dcdcdc" stroke-width="1.2"/>
<path d="M1504,189 H1516 V192 H1514.8 L1514.4,190.5 H1511.2 V200.5 H1513 V201.5 H1507 V200.5 H1508.8 V190.5 H1505.6 L1505.2,192 H1504 Z" fill="#dcdcdc"/>
<rect x="1534.5" y="189.5" width="11" height="11" fill="none" stroke="#dcdcdc" stroke-width="1.2"/><g fill="#535353" stroke="#dcdcdc" stroke-width="1"><circle cx="1534.5" cy="189.5" r="1.5"/><circle cx="1545.5" cy="189.5" r="1.5"/><circle cx="1534.5" cy="200.5" r="1.5"/><circle cx="1545.5" cy="200.5" r="1.5"/></g>
<path d="M1568,188.5 H1573.5 L1577,192 V201 H1568 Z" fill="none" stroke="#dcdcdc" stroke-width="1.1"/><rect x="1564" y="195" width="6.5" height="7" fill="#dcdcdc"/>
<rect x="1595.5" y="185" width="10" height="21" rx="5" fill="#464646" stroke="#4e4e4e"/><circle cx="1600.5" cy="190" r="5" fill="#dcdcdc"/>
</svg>
<div class="a" style="left:1311px;top:220px;width:146px;height:27px;background:#505050;border:1px solid #4a4a4a;border-radius:3px"></div>
<div class="t" style="left:1320px;top:225px;font-size:14px;color:#8e8e8e">正常</div>
<div class="t" style="left:1466px;top:223px;font-size:14px;color:#8e8e8e">不透明度:</div>
<div class="a" style="left:1537px;top:220px;width:67px;height:23px;background:#505050;border:1px solid #4a4a4a;border-radius:3px"></div>
<div class="a" style="left:1539px;top:222px;width:41px;height:19px;background:#4a4a4a"></div>
<div class="t" style="left:1540px;top:225px;font-size:13px;color:#7c7c7c">100%</div>
<div class="t" style="left:1312px;top:260px;font-size:14px;color:#e6e6e6">鎖定:</div>
<div class="t" style="left:1495px;top:260px;font-size:14px;color:#8e8e8e">填滿:</div>
<div class="a" style="left:1537px;top:256px;width:67px;height:23px;background:#505050;border:1px solid #4a4a4a;border-radius:3px"></div>
<div class="a" style="left:1539px;top:258px;width:41px;height:19px;background:#4a4a4a"></div>
<div class="t" style="left:1540px;top:261px;font-size:13px;color:#7c7c7c">100%</div>
<svg style="left:0;top:0" width="1918" height="1016" viewBox="0 0 1918 1016">
<path d="M1443,233 L1447,237 L1451,233" fill="none" stroke="#7a7a7a" stroke-width="1"/>
<rect x="1582" y="221" width="1" height="21" fill="#474747"/><path d="M1590,232 L1593.5,235.5 L1597,232" fill="none" stroke="#7a7a7a" stroke-width="1"/>
<rect x="1582" y="257" width="1" height="21" fill="#474747"/><path d="M1590,268 L1593.5,271.5 L1597,268" fill="none" stroke="#7a7a7a" stroke-width="1"/>
<rect x="1361.5" y="260.5" width="13" height="13" fill="#535353" stroke="#dcdcdc" stroke-width="1.4"/><g fill="#dcdcdc"><rect x="1362" y="261" width="4" height="4"/><rect x="1370" y="261" width="4" height="4"/><rect x="1366" y="265" width="4" height="4"/><rect x="1362" y="269" width="4" height="4"/><rect x="1370" y="269" width="4" height="4"/></g>
<path d="M1404.5,259 C1401,262.5 1397.5,267 1395.5,270 L1397.5,271.5 C1400,268.5 1403,264 1405,259.5 Z" fill="#dcdcdc"/><path d="M1394.5,271 C1391.5,271.5 1391,274.5 1388.5,276 C1392,276.5 1396,275 1396.5,272.5 Z" fill="#dcdcdc"/>
<path d="M1422,259 V275 M1414,267 H1430" stroke="#dcdcdc" stroke-width="1.5"/><path d="M1422,258 L1419,261.5 H1425 Z M1422,276 L1419,272.5 H1425 Z M1413,267 L1416.5,264 V270 Z M1431,267 L1427.5,264 V270 Z" fill="#dcdcdc"/>
<path d="M1446,262 H1455 L1457,264 V273 M1444.5,262 V271.5 H1457" fill="none" stroke="#dcdcdc" stroke-width="1.5"/><g fill="#dcdcdc"><rect x="1442" y="259.5" width="2" height="2"/><rect x="1457.5" y="259.5" width="2" height="2"/><rect x="1442" y="274" width="2" height="2"/><rect x="1457.5" y="274" width="2" height="2"/></g>
<path d="M1474,266 V263.5 A3.5,3.5 0 0 1 1481,263.5 V266" fill="none" stroke="#dcdcdc" stroke-width="1.6"/><rect x="1471.5" y="266" width="12" height="9" rx="1" fill="#dcdcdc"/><circle cx="1477.5" cy="270.5" r="1.3" fill="#535353"/>
</svg>
<div class="t" style="left:1416px;top:291.5px;font-size:14.5px;word-spacing:1.8px;color:#ececec">資料夾 13</div>
<div class="t" style="left:1416px;top:322.5px;font-size:14.5px;word-spacing:1.8px;color:#ececec">資料夾 4</div>
<div class="t" style="left:1397px;top:353.5px;font-size:14.5px;word-spacing:1.8px;color:#ececec">2</div>
<div class="t" style="left:1416px;top:385.0px;font-size:14.5px;word-spacing:1.8px;color:#ececec">資料夾 2</div>
<div class="t" style="left:1416px;top:416.5px;font-size:14.5px;word-spacing:1.8px;color:#ececec">資料夾 5</div>
<div class="t" style="left:1397px;top:447.5px;font-size:14.5px;word-spacing:1.8px;color:#ececec">1</div>
<div class="t" style="left:1416px;top:479.0px;font-size:14.5px;word-spacing:1.8px;color:#ececec">資料夾 1</div>
<div class="t" style="left:1416px;top:510.5px;font-size:14.5px;word-spacing:1.8px;color:#ececec">資料夾 12</div>
<div class="a" style="left:1388px;top:538.5px;width:40px;height:40px;border:1.5px solid #2a2a2a;background-color:#fff;background-image:conic-gradient(#cdcdcd 0 25%,#fff 0 50%,#cdcdcd 0 75%,#fff 0);background-size:8px 8px;background-position:0 0"></div>
<div class="t" style="left:1441px;top:551.5px;font-size:14.5px;word-spacing:1.8px;color:#ececec">圖層 29</div>
<div class="a" style="left:1388px;top:589.5px;width:40px;height:40px;border:1.5px solid #2a2a2a;background-color:#fff;background-image:conic-gradient(#cdcdcd 0 25%,#fff 0 50%,#cdcdcd 0 75%,#fff 0);background-size:8px 8px;background-position:0 0"></div>
<div class="t" style="left:1441px;top:602.5px;font-size:14.5px;word-spacing:1.8px;color:#ececec">圖層 28</div>
<div class="a" style="left:1388px;top:640.5px;width:40px;height:40px;border:1.5px solid #2a2a2a;background-color:#fff;background-image:conic-gradient(#cdcdcd 0 25%,#fff 0 50%,#cdcdcd 0 75%,#fff 0);background-size:8px 8px;background-position:0 0"></div>
<div class="t" style="left:1441px;top:653.5px;font-size:14.5px;word-spacing:1.8px;color:#ececec">圖層 32</div>
<div class="a" style="left:1408px;top:692.0px;width:40px;height:40px;border:1.5px solid #2a2a2a;background-color:#fff;background-image:conic-gradient(#cdcdcd 0 25%,#fff 0 50%,#cdcdcd 0 75%,#fff 0);background-size:8px 8px;background-position:0 0"></div>
<div class="t" style="left:1461px;top:705.0px;font-size:14.5px;word-spacing:1.8px;color:#ececec">圖層 4</div>
<div class="a" style="left:1408px;top:743.5px;width:40px;height:40px;border:1.5px solid #2a2a2a;background-color:#fff;background-image:conic-gradient(#cdcdcd 0 25%,#fff 0 50%,#cdcdcd 0 75%,#fff 0);background-size:8px 8px;background-position:0 0"></div>
<div class="t" style="left:1461px;top:756.5px;font-size:14.5px;word-spacing:1.8px;color:#ececec">圖層 95</div>
<div class="a" style="left:1408px;top:794.5px;width:40px;height:40px;border:1.5px solid #2a2a2a;background-color:#fff;background-image:conic-gradient(#cdcdcd 0 25%,#fff 0 50%,#cdcdcd 0 75%,#fff 0);background-size:8px 8px;background-position:0 0"></div>
<div class="t" style="left:1461px;top:807.5px;font-size:14.5px;word-spacing:1.8px;color:#ececec">圖層 93</div>
<div class="a" style="left:1388px;top:846.0px;width:40px;height:40px;border:1.5px solid #2a2a2a;background-color:#fff;background-image:conic-gradient(#cdcdcd 0 25%,#fff 0 50%,#cdcdcd 0 75%,#fff 0);background-size:8px 8px;background-position:0 0"></div>
<div class="t" style="left:1440px;top:859.0px;font-size:14.5px;word-spacing:1.8px;color:#ececec">圖層 2</div>
<div class="t" style="left:1400px;top:911.0px;font-size:14.5px;word-spacing:1.8px;color:#ececec">紙張</div>
<svg style="left:0;top:0" width="1918" height="1016" viewBox="0 0 1918 1016"><defs><pattern id="chk" x="1389.5" y="0" width="8" height="8" patternUnits="userSpaceOnUse"><rect width="8" height="8" fill="#fff"/><rect width="4" height="4" fill="#cdcdcd" x="4"/><rect width="4" height="4" fill="#cdcdcd" y="4"/></pattern></defs>
<rect x="1305" y="312" width="344" height="2" fill="#4a4a4a"/>
<rect x="1343" y="283" width="2" height="29" fill="#4f4f4f"/>
<path d="M1317,298.5 C1319.5,293.0 1329.5,293.0 1332,298.5 C1329.5,304.0 1319.5,304.0 1317,298.5 Z" fill="#a6a6a6"/><circle cx="1324.5" cy="298.5" r="3.3" fill="#535353"/><circle cx="1325.3" cy="297.5" r="0.9" fill="#a6a6a6"/>
<path d="M1371,293.5 L1375,298.5 L1371,303.5" fill="none" stroke="#cfcfcf" stroke-width="1.1"/>
<path d="M1383,290.5 H1390 L1391,292.0 H1401 V304.5 H1383 Z" fill="#e2e2e2"/><rect x="1383" y="292.5" width="18" height="0.8" fill="#535353"/>
<rect x="1305" y="343" width="344" height="2" fill="#4a4a4a"/>
<rect x="1343" y="314" width="2" height="29" fill="#4f4f4f"/>
<rect x="1317.5" y="322.0" width="15" height="15" fill="none" stroke="#4a4a4a" stroke-width="1.5"/>
<path d="M1371,324.5 L1375,329.5 L1371,334.5" fill="none" stroke="#cfcfcf" stroke-width="1.1"/>
<path d="M1383,321.5 H1390 L1391,323.0 H1401 V335.5 H1383 Z" fill="#e2e2e2"/><rect x="1383" y="323.5" width="18" height="0.8" fill="#535353"/>
<rect x="1305" y="374" width="344" height="2" fill="#4a4a4a"/>
<rect x="1343" y="345" width="2" height="29" fill="#4f4f4f"/>
<rect x="1317.5" y="353.0" width="15" height="15" fill="none" stroke="#4a4a4a" stroke-width="1.5"/>
<path d="M1349,357.5 L1354,363.0 L1359,357.5" fill="none" stroke="#cfcfcf" stroke-width="1.1"/>
<path d="M1363,353.5 H1370 L1371,355.0 H1381 V367.5 H1363 Z" fill="#e2e2e2"/><path d="M1365,355.5 H1369.5 L1370.5,357.0 H1379 V359.5 H1365 Z" fill="#535353"/>
<rect x="1305" y="406" width="344" height="2" fill="#4a4a4a"/>
<rect x="1343" y="376" width="2" height="30" fill="#4f4f4f"/>
<path d="M1317,392.0 C1319.5,386.5 1329.5,386.5 1332,392.0 C1329.5,397.5 1319.5,397.5 1317,392.0 Z" fill="#a6a6a6"/><circle cx="1324.5" cy="392.0" r="3.3" fill="#535353"/><circle cx="1325.3" cy="391.0" r="0.9" fill="#a6a6a6"/>
<path d="M1371,387.0 L1375,392.0 L1371,397.0" fill="none" stroke="#cfcfcf" stroke-width="1.1"/>
<path d="M1383,384.0 H1390 L1391,385.5 H1401 V398.0 H1383 Z" fill="#e2e2e2"/><rect x="1383" y="386.0" width="18" height="0.8" fill="#535353"/>
<rect x="1305" y="437" width="344" height="2" fill="#4a4a4a"/>
<rect x="1343" y="408" width="2" height="29" fill="#4f4f4f"/>
<rect x="1317.5" y="416.0" width="15" height="15" fill="none" stroke="#4a4a4a" stroke-width="1.5"/>
<path d="M1371,418.5 L1375,423.5 L1371,428.5" fill="none" stroke="#cfcfcf" stroke-width="1.1"/>
<path d="M1383,415.5 H1390 L1391,417.0 H1401 V429.5 H1383 Z" fill="#e2e2e2"/><rect x="1383" y="417.5" width="18" height="0.8" fill="#535353"/>
<rect x="1305" y="468" width="344" height="2" fill="#4a4a4a"/>
<rect x="1343" y="439" width="2" height="29" fill="#4f4f4f"/>
<path d="M1317,454.5 C1319.5,449.0 1329.5,449.0 1332,454.5 C1329.5,460.0 1319.5,460.0 1317,454.5 Z" fill="#e8e8e8"/><circle cx="1324.5" cy="454.5" r="3.3" fill="#535353"/><circle cx="1325.3" cy="453.5" r="0.9" fill="#e8e8e8"/>
<path d="M1349,451.5 L1354,457.0 L1359,451.5" fill="none" stroke="#cfcfcf" stroke-width="1.1"/>
<path d="M1363,447.5 H1370 L1371,449.0 H1381 V461.5 H1363 Z" fill="#e2e2e2"/><path d="M1365,449.5 H1369.5 L1370.5,451.0 H1379 V453.5 H1365 Z" fill="#535353"/>
<rect x="1305" y="500" width="344" height="2" fill="#4a4a4a"/>
<rect x="1343" y="470" width="2" height="30" fill="#4f4f4f"/>
<rect x="1317.5" y="478.5" width="15" height="15" fill="none" stroke="#4a4a4a" stroke-width="1.5"/>
<path d="M1371,481.0 L1375,486.0 L1371,491.0" fill="none" stroke="#cfcfcf" stroke-width="1.1"/>
<path d="M1383,478.0 H1390 L1391,479.5 H1401 V492.0 H1383 Z" fill="#e2e2e2"/><rect x="1383" y="480.0" width="18" height="0.8" fill="#535353"/>
<rect x="1305" y="531" width="344" height="2" fill="#4a4a4a"/>
<rect x="1343" y="502" width="2" height="29" fill="#4f4f4f"/>
<path d="M1317,517.5 C1319.5,512.0 1329.5,512.0 1332,517.5 C1329.5,523.0 1319.5,523.0 1317,517.5 Z" fill="#e8e8e8"/><circle cx="1324.5" cy="517.5" r="3.3" fill="#535353"/><circle cx="1325.3" cy="516.5" r="0.9" fill="#e8e8e8"/>
<path d="M1368,514.5 L1373,520.0 L1378,514.5" fill="none" stroke="#cfcfcf" stroke-width="1.1"/>
<path d="M1383,510.5 H1390 L1391,512.0 H1401 V524.5 H1383 Z" fill="#e2e2e2"/><path d="M1385,512.5 H1389.5 L1390.5,514.0 H1399 V516.5 H1385 Z" fill="#535353"/>
<rect x="1305" y="582" width="344" height="2" fill="#4a4a4a"/>
<rect x="1343" y="533" width="2" height="49" fill="#4f4f4f"/>
<path d="M1317,557.5 C1319.5,552.0 1329.5,552.0 1332,557.5 C1329.5,563.0 1319.5,563.0 1317,557.5 Z" fill="#e8e8e8"/><circle cx="1324.5" cy="557.5" r="3.3" fill="#535353"/><circle cx="1325.3" cy="556.5" r="0.9" fill="#e8e8e8"/>
<rect x="1305" y="633" width="344" height="2" fill="#4a4a4a"/>
<rect x="1343" y="584" width="2" height="49" fill="#4f4f4f"/>
<path d="M1317,608.5 C1319.5,603.0 1329.5,603.0 1332,608.5 C1329.5,614.0 1319.5,614.0 1317,608.5 Z" fill="#e8e8e8"/><circle cx="1324.5" cy="608.5" r="3.3" fill="#535353"/><circle cx="1325.3" cy="607.5" r="0.9" fill="#e8e8e8"/>
<rect x="1305" y="684" width="344" height="2" fill="#4a4a4a"/>
<rect x="1343" y="635" width="2" height="49" fill="#4f4f4f"/>
<path d="M1317,659.5 C1319.5,654.0 1329.5,654.0 1332,659.5 C1329.5,665.0 1319.5,665.0 1317,659.5 Z" fill="#e8e8e8"/><circle cx="1324.5" cy="659.5" r="3.3" fill="#535353"/><circle cx="1325.3" cy="658.5" r="0.9" fill="#e8e8e8"/>
<rect x="1305" y="736" width="344" height="2" fill="#4a4a4a"/>
<rect x="1343" y="686" width="2" height="50" fill="#4f4f4f"/>
<path d="M1317,711.0 C1319.5,705.5 1329.5,705.5 1332,711.0 C1329.5,716.5 1319.5,716.5 1317,711.0 Z" fill="#e8e8e8"/><circle cx="1324.5" cy="711.0" r="3.3" fill="#535353"/><circle cx="1325.3" cy="710.0" r="0.9" fill="#e8e8e8"/>
<path d="M1404,708.5 H1400 V714.0" fill="none" stroke="#dcdcdc" stroke-width="1.4"/><path d="M1396.5,713.0 L1403.5,713.0 L1400,717.0 Z" fill="#dcdcdc"/>
<rect x="1305" y="787" width="344" height="2" fill="#4a4a4a"/>
<rect x="1343" y="738" width="2" height="49" fill="#4f4f4f"/>
<path d="M1317,762.5 C1319.5,757.0 1329.5,757.0 1332,762.5 C1329.5,768.0 1319.5,768.0 1317,762.5 Z" fill="#e8e8e8"/><circle cx="1324.5" cy="762.5" r="3.3" fill="#535353"/><circle cx="1325.3" cy="761.5" r="0.9" fill="#e8e8e8"/>
<path d="M1404,760.0 H1400 V765.5" fill="none" stroke="#dcdcdc" stroke-width="1.4"/><path d="M1396.5,764.5 L1403.5,764.5 L1400,768.5 Z" fill="#dcdcdc"/>
<rect x="1305" y="838" width="344" height="2" fill="#4a4a4a"/>
<rect x="1343" y="789" width="2" height="49" fill="#4f4f4f"/>
<path d="M1317,813.5 C1319.5,808.0 1329.5,808.0 1332,813.5 C1329.5,819.0 1319.5,819.0 1317,813.5 Z" fill="#e8e8e8"/><circle cx="1324.5" cy="813.5" r="3.3" fill="#535353"/><circle cx="1325.3" cy="812.5" r="0.9" fill="#e8e8e8"/>
<path d="M1404,811.0 H1400 V816.5" fill="none" stroke="#dcdcdc" stroke-width="1.4"/><path d="M1396.5,815.5 L1403.5,815.5 L1400,819.5 Z" fill="#dcdcdc"/>
<rect x="1305" y="890" width="344" height="2" fill="#4a4a4a"/>
<rect x="1343" y="840" width="2" height="50" fill="#4f4f4f"/>
<path d="M1317,865.0 C1319.5,859.5 1329.5,859.5 1332,865.0 C1329.5,870.5 1319.5,870.5 1317,865.0 Z" fill="#e8e8e8"/><circle cx="1324.5" cy="865.0" r="3.3" fill="#535353"/><circle cx="1325.3" cy="864.0" r="0.9" fill="#e8e8e8"/>
<rect x="1305" y="942" width="344" height="2" fill="#4a4a4a"/>
<rect x="1343" y="892" width="2" height="50" fill="#4f4f4f"/>
<path d="M1317,917.0 C1319.5,911.5 1329.5,911.5 1332,917.0 C1329.5,922.5 1319.5,922.5 1317,917.0 Z" fill="#e8e8e8"/><circle cx="1324.5" cy="917.0" r="3.3" fill="#535353"/><circle cx="1325.3" cy="916.0" r="0.9" fill="#e8e8e8"/>
<rect x="1348" y="898.0" width="40" height="40" fill="#2a2a2a"/>
<rect x="1349.5" y="899.5" width="37" height="37" fill="#b3b3b3"/>
</svg>
<div class="a" style="left:1668px;top:136px;width:1px;height:849px;background:#464646"></div>
<div class="a" style="left:1649px;top:288px;width:20px;height:655px;background:#4a4a4a"></div>
<div class="a" style="left:1652px;top:522px;width:14px;height:399px;background:#6a6a6a;border-radius:2px"></div>
<svg style="left:0;top:0" width="1918" height="1016" viewBox="0 0 1918 1016">
<path d="M1656,302 L1660,298 L1664,302" fill="none" stroke="#8a8a8a" stroke-width="1"/>
<path d="M1656,928 L1660,932 L1664,928" fill="none" stroke="#8a8a8a" stroke-width="1"/>
<rect x="1305" y="943" width="364" height="1" fill="#4a4a4a"/>
<rect x="1305" y="974" width="364" height="2" fill="#3e3e3e"/>
<rect x="1305" y="976" width="364" height="9" fill="#4d4d4d"/>
<g fill="#353535"><rect x="1474.0" y="978" width="1" height="5"/><rect x="1476.5" y="978" width="1" height="5"/><rect x="1479.0" y="978" width="1" height="5"/><rect x="1481.5" y="978" width="1" height="5"/><rect x="1484.0" y="978" width="1" height="5"/><rect x="1486.5" y="978" width="1" height="5"/><rect x="1489.0" y="978" width="1" height="5"/><rect x="1491.5" y="978" width="1" height="5"/><rect x="1494.0" y="978" width="1" height="5"/><rect x="1496.5" y="978" width="1" height="5"/></g>
<path d="M1421,956 H1418.5 A3,3 0 0 0 1418.5,962 H1421 M1427,956 H1429.5 A3,3 0 0 1 1429.5,962 H1427 M1420,959 H1428" fill="none" stroke="#a0a0a0" stroke-width="1.6"/>
<text x="1451" y="966" font-family="Liberation Serif" font-style="italic" font-size="17" fill="#dcdcdc">fx</text><path d="M1465,967 L1469,967 L1467,969 Z" fill="#e6e6e6"/>
<rect x="1484" y="953" width="16" height="12" fill="#dcdcdc"/><circle cx="1492" cy="959" r="3.6" fill="#535353"/>
<circle cx="1526" cy="959" r="6" fill="#dcdcdc"/><path d="M1521.8,963.2 L1530.2,954.8 A6,6 0 0 0 1521.8,963.2 Z" fill="#535353"/><circle cx="1526" cy="959" r="5.4" fill="none" stroke="#dcdcdc" stroke-width="1.2"/><path d="M1532,967 L1536,967 L1534,969 Z" fill="#e6e6e6"/>
<path d="M1552,953 H1559 L1560,954.5 H1567.5 V965.5 H1552 Z" fill="#dcdcdc"/><rect x="1552" y="955.2" width="15.5" height="0.7" fill="#535353"/>
<rect x="1586.5" y="952.5" width="14" height="14" fill="none" stroke="#dcdcdc" stroke-width="1.3"/><path d="M1593.5,955.5 V963.5 M1589.5,959.5 H1597.5" stroke="#dcdcdc" stroke-width="1.5"/>
<path d="M1620,955 H1634 M1624.5,955 V953 H1629.5 V955" fill="none" stroke="#dcdcdc" stroke-width="1.4"/><path d="M1621.5,956.5 H1632.5 L1631.5,967 H1622.5 Z" fill="none" stroke="#dcdcdc" stroke-width="1.4"/><path d="M1625,958.5 V965 M1627,958.5 V965 M1629,958.5 V965" stroke="#dcdcdc" stroke-width="1"/>
<g fill="none" stroke="#9a9a9a" stroke-width="0.7" opacity="0.9"><ellipse cx="1403.5" cy="666" rx="7.5" ry="10" transform="rotate(25 1403.5 666)"/><path d="M1398,657 C1400,655 1404,655 1406,656 M1395,664 L1392,667 M1395,672 L1393,675 M1410,662 L1413,664 M1411,670 L1413,672 M1406,675 L1408,678"/></g><circle cx="1403" cy="658.5" r="1.5" fill="#000"/><circle cx="1406.5" cy="659.5" r="1.5" fill="#000"/>
<defs><radialGradient id="sm"><stop offset="0" stop-color="#555" stop-opacity="0.9"/><stop offset="1" stop-color="#888" stop-opacity="0"/></radialGradient></defs><ellipse cx="1421" cy="771" rx="5" ry="7" fill="url(#sm)"/>
<ellipse cx="1402.5" cy="871" rx="5.6" ry="8.8" transform="rotate(20 1402.5 871)" fill="#7a2b12"/><g stroke="#7a2b12" stroke-width="1.3" stroke-linecap="round"><path d="M1397.5,867 L1396,865.5 M1396.5,872 L1395,872.5 M1397,876.5 L1395.5,878.5 M1408,868 L1410.5,868.5 M1408,874 L1410,875 M1405,879 L1405.5,881"/></g>
<rect x="1439" y="871" width="48" height="1" fill="#dcdcdc"/>
</svg>
<div class="a" style="left:51px;top:996px;width:1867px;height:20px;background:#4a4a4a"></div>
<div class="a" style="left:51px;top:996px;width:59px;height:20px;background:#464646;overflow:hidden"><div class="t" style="left:3px;top:3px;font-size:13.5px;color:#f2f2f2">177.16%</div></div>
<div class="a" style="left:110px;top:996px;width:229px;height:20px;background:#535353"></div>
<div class="t" style="left:124px;top:999px;font-size:13.5px;letter-spacing:0.25px;color:#e6e6e6">500 像素 x 500 像素 (300 ppi)</div>
<div class="a" style="left:842px;top:1000px;width:644px;height:13px;background:#666;border-radius:2px"></div>
<div class="a" style="left:1898px;top:996px;width:20px;height:20px;background:#535353"></div>
<div class="a" style="left:1900px;top:401px;width:15px;height:306px;background:#666;border-radius:2px"></div>
<svg style="left:0;top:0" width="1918" height="1016" viewBox="0 0 1918 1016">
<path d="M328.5,1002 L332,1006 L328.5,1010" fill="none" stroke="#d0d0d0" stroke-width="1.1"/>
<path d="M356,1003 L352.5,1006.5 L356,1010" fill="none" stroke="#9a9a9a" stroke-width="1"/>
<path d="M1883.5,1003 L1887,1006.5 L1883.5,1010" fill="none" stroke="#9a9a9a" stroke-width="1"/>
<path d="M1904,128 L1908,124 L1912,128" fill="none" stroke="#b0b0b0" stroke-width="1"/>
<path d="M1904,980 L1908,984 L1912,980" fill="none" stroke="#9a9a9a" stroke-width="1"/>
</svg>

</body></html>
